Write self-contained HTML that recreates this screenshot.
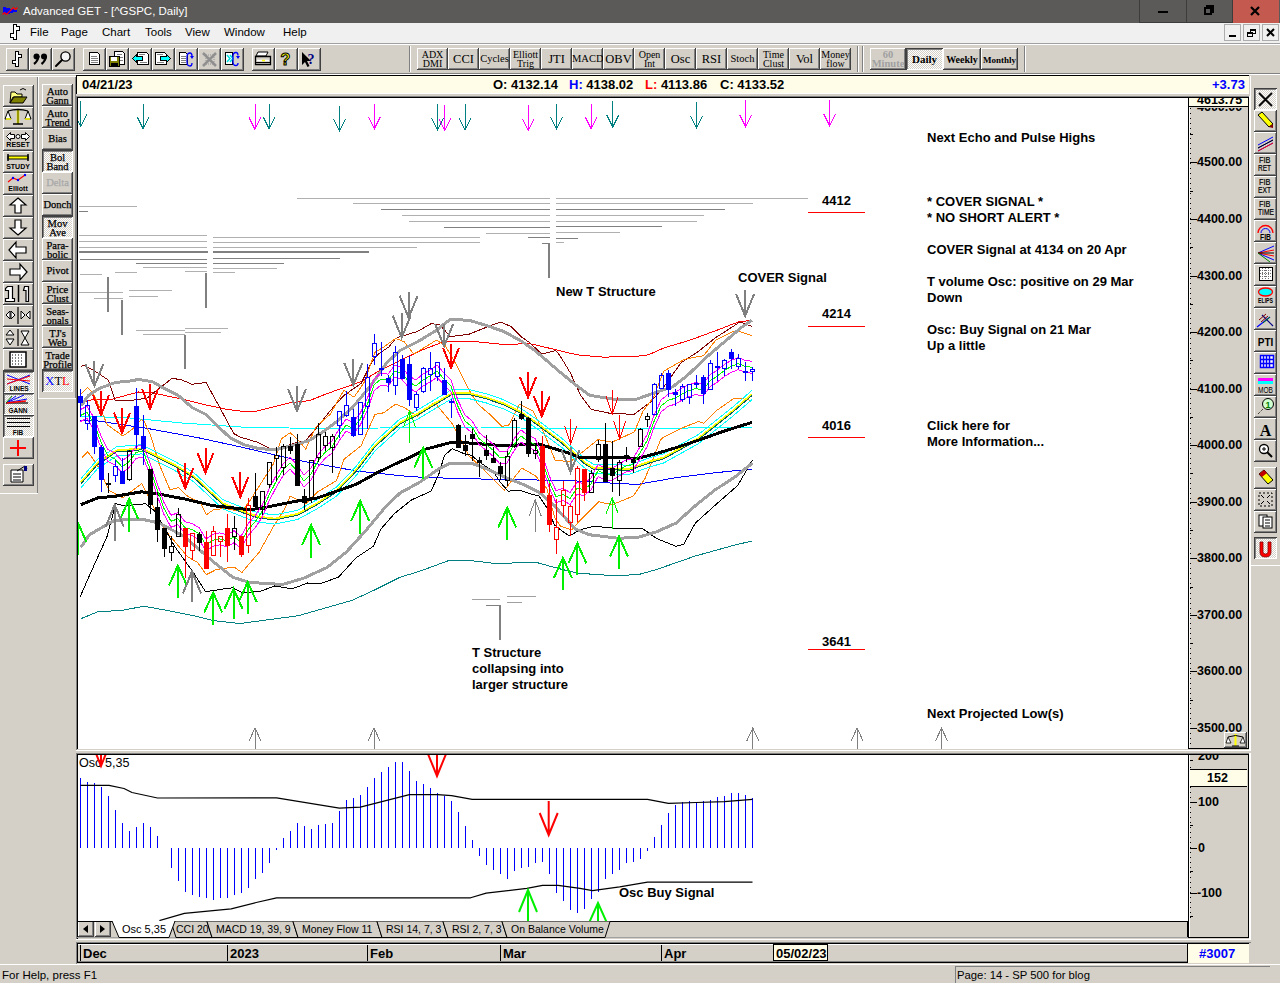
<!DOCTYPE html><html><head><meta charset="utf-8"><style>
*{box-sizing:border-box;margin:0;padding:0}
html,body{width:1280px;height:983px;overflow:hidden;background:#d4d0c8;font-family:"Liberation Sans",sans-serif;}
.abs{position:absolute}
.btn{position:absolute;background:#d4d0c8;box-shadow:inset -1px -1px #404040,inset 1px 1px #ffffff,inset -2px -2px #808080;}
.prs{position:absolute;background:repeating-conic-gradient(#ffffff 0 25%,#d4d0c8 0 50%) 0 0/2px 2px;box-shadow:inset 1px 1px #404040,inset -1px -1px #ffffff,inset 2px 2px #808080;}
.t{position:absolute;white-space:nowrap;line-height:1}
.srf{font-family:"Liberation Serif",serif;font-size:10.5px;line-height:9px;text-align:center;color:#000;letter-spacing:0px}
.b13{font-weight:bold;font-size:13px}
svg{position:absolute;left:0;top:0}
</style></head><body>
<div class="abs" style="left:0;top:0;width:1280px;height:23px;background:#5b5a58"></div>
<svg width="22" height="22" style="left:0;top:0"><path d="M3 7 H6 V8 H10 V9 H14 V10 H17 V12 H13 V13 H10 V14 H3 Z" fill="#0000ff"/><path d="M2.5 14.5 L4.5 12.5 L6.5 14.5 L11.5 9.5 L13.5 7.5 L15.5 9.5 L17.5 7.5" stroke="#ff0000" stroke-width="1.2" fill="none"/></svg>
<div class="t" style="left:23px;top:6px;font-size:11.5px;color:#ffffff">Advanced GET - [^GSPC, Daily]</div>
<div class="abs" style="left:1139px;top:0;width:47px;height:23px;border-left:1px solid #3c3c3c;border-bottom:1px solid #3c3c3c"></div>
<div class="abs" style="left:1186px;top:0;width:46px;height:23px;border-left:1px solid #3c3c3c;border-bottom:1px solid #3c3c3c"></div>
<div class="abs" style="left:1232px;top:0;width:47px;height:23px;background:#c4594f;border-left:1px solid #3c3c3c"></div>
<div class="abs" style="left:1158px;top:11px;width:10px;height:2px;background:#000"></div>
<div class="abs" style="left:1206px;top:5px;width:8px;height:8px;border:2px solid #000"></div><div class="abs" style="left:1204px;top:7px;width:8px;height:8px;border:2px solid #000;background:#5b5a58"></div>
<svg width="1280" height="30" style="left:0;top:0"><path d="M1251 7 L1259 15 M1259 7 L1251 15" stroke="#000" stroke-width="2.2"/></svg>
<div class="abs" style="left:0;top:23px;width:1280px;height:20px;background:#f0f0f0"></div>
<svg width="30" height="44" style="left:0;top:0" shape-rendering="crispEdges"><path d="M13.5 24.5 H16.5 V26.5 H19.5 V30.5 H16.5 V39.5 H13.5 V37.5 H10.5 V33.5 H13.5 Z" fill="#fff" stroke="#000" stroke-width="1"/></svg>
<div class="t" style="left:30px;top:27px;font-size:11.5px;color:#000">File</div>
<div class="t" style="left:61px;top:27px;font-size:11.5px;color:#000">Page</div>
<div class="t" style="left:102px;top:27px;font-size:11.5px;color:#000">Chart</div>
<div class="t" style="left:145px;top:27px;font-size:11.5px;color:#000">Tools</div>
<div class="t" style="left:185px;top:27px;font-size:11.5px;color:#000">View</div>
<div class="t" style="left:224px;top:27px;font-size:11.5px;color:#000">Window</div>
<div class="t" style="left:283px;top:27px;font-size:11.5px;color:#000">Help</div>
<div class="abs" style="left:1224px;top:24px;width:17px;height:17px;background:#f0f0f0;border:1px solid #adadad"></div>
<div class="abs" style="left:1243px;top:24px;width:17px;height:17px;background:#f0f0f0;border:1px solid #adadad"></div>
<div class="abs" style="left:1262px;top:24px;width:17px;height:17px;background:#f0f0f0;border:1px solid #adadad"></div>
<div class="abs" style="left:1229px;top:35px;width:7px;height:2px;background:#000"></div>
<div class="abs" style="left:1250px;top:29px;width:6px;height:5px;border:1px solid #000;border-top-width:2px"></div><div class="abs" style="left:1247px;top:32px;width:6px;height:5px;border:1px solid #000;border-top-width:2px;background:#f0f0f0"></div>
<svg width="1280" height="45" style="left:0;top:0"><path d="M1267 29 L1274 36 M1274 29 L1267 36" stroke="#000" stroke-width="2"/></svg>
<div class="abs" style="left:0;top:43px;width:1280px;height:1px;background:#a0a0a0"></div>
<div class="abs" style="left:0;top:44px;width:1280px;height:1px;background:#ffffff"></div>
<div class="abs" style="left:409px;top:46px;width:1px;height:26px;background:#808080"></div><div class="abs" style="left:410px;top:46px;width:1px;height:26px;background:#fff"></div>
<div class="abs" style="left:857px;top:46px;width:1px;height:26px;background:#808080"></div><div class="abs" style="left:858px;top:46px;width:1px;height:26px;background:#fff"></div>
<div class="abs" style="left:862px;top:46px;width:1px;height:26px;background:#808080"></div><div class="abs" style="left:863px;top:46px;width:1px;height:26px;background:#fff"></div>
<div class="abs" style="left:1024px;top:46px;width:1px;height:26px;background:#808080"></div><div class="abs" style="left:1025px;top:46px;width:1px;height:26px;background:#fff"></div>
<div class="btn" style="left:6px;top:48px;width:23px;height:23px"></div>
<div class="btn" style="left:29px;top:48px;width:23px;height:23px"></div>
<div class="btn" style="left:52px;top:48px;width:23px;height:23px"></div>
<div class="btn" style="left:83px;top:48px;width:23px;height:23px"></div>
<div class="btn" style="left:106px;top:48px;width:23px;height:23px"></div>
<div class="btn" style="left:129px;top:48px;width:23px;height:23px"></div>
<div class="btn" style="left:152px;top:48px;width:23px;height:23px"></div>
<div class="btn" style="left:175px;top:48px;width:23px;height:23px"></div>
<div class="btn" style="left:198px;top:48px;width:23px;height:23px"></div>
<div class="btn" style="left:221px;top:48px;width:23px;height:23px"></div>
<div class="btn" style="left:252px;top:48px;width:23px;height:23px"></div>
<div class="btn" style="left:275px;top:48px;width:23px;height:23px"></div>
<div class="btn" style="left:298px;top:48px;width:23px;height:23px"></div>
<svg width="400" height="80" style="left:0;top:0" shape-rendering="crispEdges"><path d="M15.5 51.5 H18.5 V54.5 H21.5 V57.5 H18.5 V66.5 H15.5 V63.5 H12.5 V60.5 H15.5 Z" fill="#fff" stroke="#000" stroke-width="1"/></svg><svg width="400" height="80" style="left:0;top:0"><circle cx="36.5" cy="56.5" r="3" fill="#000"/><path d="M38.5 56 Q38.0 61 34.0 64" stroke="#000" stroke-width="2.2" fill="none"/><circle cx="44.0" cy="56.5" r="3" fill="#000"/><path d="M46.0 56 Q45.5 61 41.5 64" stroke="#000" stroke-width="2.2" fill="none"/><circle cx="65.5" cy="56.5" r="4.6" fill="#f4f4f4" stroke="#000" stroke-width="1.4"/><path d="M62 60 L56 66" stroke="#000" stroke-width="2" stroke-linecap="round"/></svg><svg width="400" height="80" style="left:0;top:0" shape-rendering="crispEdges"><path d="M89.5 52.5 H97.5 L99.5 54.5 V64.5 H89.5 Z" fill="#fff" stroke="#000" stroke-width="1"/><path d="M91 56.5 H97 M91 58.5 H98 M91 60.5 H98 M91 62.5 H98" stroke="#808080" stroke-width="1"/><path d="M114.5 51.5 H122.5 L124.5 53.5 V64.5 H114.5 Z" fill="#fff" stroke="#000"/><path d="M117 54.5 H122 M119 57.5 H123 M119 60.5 H123" stroke="#808080"/><rect x="109.5" y="56.5" width="10" height="10" fill="#808000" stroke="#000"/><rect x="111" y="57" width="6" height="4" fill="#fff"/><rect x="111" y="63" width="7" height="3" fill="#000"/><path d="M137.5 52.5 H146.5 L148.5 54.5 V64.5 H137.5 Z" fill="#fff" stroke="#000"/><path d="M139 54.5 H145 M140 62.5 H147" stroke="#808080"/><path d="M132.5 58.5 L136.5 54.5 V56.5 H142.5 V60.5 H136.5 V62.5 Z" fill="#00ffff" stroke="#000" stroke-width="1"/><path d="M155.5 52.5 H164.5 L166.5 54.5 V64.5 H155.5 Z" fill="#fff" stroke="#000"/><path d="M157 54.5 H163 M157 62.5 H164" stroke="#808080"/><path d="M170.5 58.5 L166.5 54.5 V56.5 H160.5 V60.5 H166.5 V62.5 Z" fill="#00ffff" stroke="#000" stroke-width="1"/><path d="M179.5 52.5 H185.5 L187.5 54.5 V64.5 H179.5 Z" fill="#fff" stroke="#000"/><path d="M181 56.5 H186 M181 58.5 H186 M181 60.5 H186 M181 62.5 H186" stroke="#808080"/></svg><svg width="400" height="80" style="left:0;top:0"><path d="M190 53 Q187 53 187 57 V62 Q187 66 190 66 Q192 66 192 63" stroke="#0000ff" stroke-width="1.3" fill="none"/><path d="M190 53 Q192 53 192 56" stroke="#0000ff" stroke-width="1.3" fill="none"/><path d="M190 56 L194 56 L192 59 Z" fill="#0000ff"/><path d="M203 53 L216 66 M216 53 L203 66" stroke="#909090" stroke-width="2.5"/><rect x="206" y="55" width="8" height="9" fill="none" stroke="#909090" stroke-dasharray="1 1"/><rect x="225.5" y="52.5" width="7" height="12" fill="#fff" stroke="#000"/><path d="M227 55 L230 58.5 L227 62 M230 55 L233 58.5 L230 62" stroke="#00e0e0" stroke-width="1.5" fill="none"/><path d="M236 52.5 Q233 52.5 233 56 V62 Q233 65.5 236 65.5 Q238 65.5 238 63" stroke="#0000ff" stroke-width="1.3" fill="none"/><path d="M236 52.5 Q238 52.5 238 55.5" stroke="#0000ff" stroke-width="1.3" fill="none"/><path d="M236 56 L240 56 L238 59 Z" fill="#0000ff"/><path d="M258 52 L268 52 L266 56 L256 56 Z" fill="#fff" stroke="#000"/><path d="M255.5 56.5 L270.5 56.5 L270.5 64.5 L255.5 64.5 Z" fill="#d4d0c8" stroke="#000" stroke-width="1.3"/><path d="M257 60.5 H269" stroke="#fff" stroke-width="1.5"/><path d="M262 60.5 H265" stroke="#ffff00" stroke-width="1.5"/><path d="M256 62.5 H270" stroke="#000"/><text x="280.5" y="64.5" font-family="Liberation Sans" font-weight="bold" font-size="16" fill="#ffff00" stroke="#000" stroke-width="1">?</text><path d="M302 52 L302 65 L305 62 L307.5 67 L309.5 66 L307 61 L311 61 Z" fill="#000"/><text x="307.5" y="64" font-family="Liberation Serif" font-weight="bold" font-size="14" fill="#000080">?</text></svg>
<div class="btn" style="left:417px;top:48px;width:31px;height:22px"></div><div class="t" style="left:417px;top:50px;width:31px;font-family:'Liberation Serif',serif;font-size:10px;line-height:9px;text-align:center;color:#000">ADX<br>DMI</div>
<div class="btn" style="left:448px;top:48px;width:31px;height:22px"></div><div class="t" style="left:448px;top:53px;width:31px;font-family:'Liberation Serif',serif;font-size:12.5px;line-height:12px;text-align:center;color:#000">CCI</div>
<div class="btn" style="left:479px;top:48px;width:31px;height:22px"></div><div class="t" style="left:479px;top:53px;width:31px;font-family:'Liberation Serif',serif;font-size:10.5px;line-height:12px;text-align:center;color:#000">Cycles</div>
<div class="btn" style="left:510px;top:48px;width:31px;height:22px"></div><div class="t" style="left:510px;top:50px;width:31px;font-family:'Liberation Serif',serif;font-size:10px;line-height:9px;text-align:center;color:#000">Elliott<br>Trig</div>
<div class="btn" style="left:541px;top:48px;width:31px;height:22px"></div><div class="t" style="left:541px;top:53px;width:31px;font-family:'Liberation Serif',serif;font-size:12.5px;line-height:12px;text-align:center;color:#000">JTI</div>
<div class="btn" style="left:572px;top:48px;width:31px;height:22px"></div><div class="t" style="left:572px;top:53px;width:31px;font-family:'Liberation Serif',serif;font-size:10.5px;line-height:12px;text-align:center;color:#000">MACD</div>
<div class="btn" style="left:603px;top:48px;width:31px;height:22px"></div><div class="t" style="left:603px;top:53px;width:31px;font-family:'Liberation Serif',serif;font-size:12.5px;line-height:12px;text-align:center;color:#000">OBV</div>
<div class="btn" style="left:634px;top:48px;width:31px;height:22px"></div><div class="t" style="left:634px;top:50px;width:31px;font-family:'Liberation Serif',serif;font-size:10px;line-height:9px;text-align:center;color:#000">Open<br>Int</div>
<div class="btn" style="left:665px;top:48px;width:31px;height:22px"></div><div class="t" style="left:665px;top:53px;width:31px;font-family:'Liberation Serif',serif;font-size:12.5px;line-height:12px;text-align:center;color:#000">Osc</div>
<div class="btn" style="left:696px;top:48px;width:31px;height:22px"></div><div class="t" style="left:696px;top:53px;width:31px;font-family:'Liberation Serif',serif;font-size:12.5px;line-height:12px;text-align:center;color:#000">RSI</div>
<div class="btn" style="left:727px;top:48px;width:31px;height:22px"></div><div class="t" style="left:727px;top:53px;width:31px;font-family:'Liberation Serif',serif;font-size:10.5px;line-height:12px;text-align:center;color:#000">Stoch</div>
<div class="btn" style="left:758px;top:48px;width:31px;height:22px"></div><div class="t" style="left:758px;top:50px;width:31px;font-family:'Liberation Serif',serif;font-size:10px;line-height:9px;text-align:center;color:#000">Time<br>Clust</div>
<div class="btn" style="left:789px;top:48px;width:31px;height:22px"></div><div class="t" style="left:789px;top:53px;width:31px;font-family:'Liberation Serif',serif;font-size:12.5px;line-height:12px;text-align:center;color:#000">Vol</div>
<div class="btn" style="left:820px;top:48px;width:31px;height:22px"></div><div class="t" style="left:820px;top:50px;width:31px;font-family:'Liberation Serif',serif;font-size:10px;line-height:9px;text-align:center;color:#000">Money<br>flow</div>
<div class="btn" style="left:870px;top:48px;width:36px;height:22px"></div><div class="t" style="left:870px;top:50px;width:36px;font-family:'Liberation Serif',serif;font-size:10.5px;line-height:9px;text-align:center;color:#a0a0a0;font-weight:bold">60<br>Minute</div>
<div class="prs" style="left:906px;top:48px;width:37px;height:22px"></div><div class="t" style="left:906px;top:53px;width:37px;font-family:'Liberation Serif',serif;font-size:11px;line-height:12px;text-align:center;color:#000;font-weight:bold">Daily</div>
<div class="btn" style="left:943px;top:48px;width:38px;height:22px"></div><div class="t" style="left:943px;top:54px;width:38px;font-family:'Liberation Serif',serif;font-size:10px;line-height:12px;text-align:center;color:#000;font-weight:bold">Weekly</div>
<div class="btn" style="left:981px;top:48px;width:37px;height:22px"></div><div class="t" style="left:981px;top:54px;width:37px;font-family:'Liberation Serif',serif;font-size:9px;line-height:12px;text-align:center;color:#000;font-weight:bold">Monthly</div>
<div class="abs" style="left:0;top:73px;width:1280px;height:1px;background:#808080"></div>
<div class="abs" style="left:0;top:74px;width:1280px;height:1px;background:#ffffff"></div>
<div class="abs" style="left:0;top:76px;width:38px;height:1px;background:#fff"></div>
<div class="abs" style="left:37px;top:77px;width:1px;height:416px;background:#808080"></div>
<div class="abs" style="left:0;top:493px;width:38px;height:1px;background:#fff"></div>
<div class="abs" style="left:38px;top:76px;width:1px;height:323px;background:#fff"></div>
<div class="abs" style="left:38px;top:76px;width:38px;height:1px;background:#fff"></div>
<div class="abs" style="left:38px;top:398px;width:38px;height:1px;background:#fff"></div>
<div class="abs" style="left:75px;top:77px;width:1px;height:321px;background:#808080"></div>
<div class="btn" style="left:3px;top:85px;width:31px;height:22px"></div>
<div class="btn" style="left:3px;top:107px;width:31px;height:22px"></div>
<div class="btn" style="left:3px;top:129px;width:31px;height:22px"></div>
<div class="btn" style="left:3px;top:151px;width:31px;height:22px"></div>
<div class="btn" style="left:3px;top:173px;width:31px;height:22px"></div>
<div class="btn" style="left:3px;top:195px;width:31px;height:22px"></div>
<div class="btn" style="left:3px;top:217px;width:31px;height:22px"></div>
<div class="btn" style="left:3px;top:239px;width:31px;height:22px"></div>
<div class="btn" style="left:3px;top:261px;width:31px;height:22px"></div>
<div class="btn" style="left:3px;top:283px;width:31px;height:22px"></div>
<div class="btn" style="left:3px;top:305px;width:31px;height:22px"></div>
<div class="btn" style="left:3px;top:327px;width:31px;height:22px"></div>
<div class="btn" style="left:3px;top:349px;width:31px;height:22px"></div>
<div class="prs" style="left:3px;top:371px;width:31px;height:22px"></div>
<div class="prs" style="left:3px;top:393px;width:31px;height:22px"></div>
<div class="prs" style="left:3px;top:415px;width:31px;height:22px"></div>
<div class="btn" style="left:3px;top:437px;width:31px;height:22px"></div>
<div class="btn" style="left:3px;top:464px;width:31px;height:22px"></div>
<svg width="80" height="500" style="left:0;top:0"><path d="M11 92 L15 92 L17 94 L22 94 L22 97 L13 97 L10 103 Z" fill="#ffff80" stroke="#000"/><path d="M10 103 L14 97 L27 97 L23 103 Z" fill="#808000" stroke="#000"/><path d="M20 90 Q23 87 26 90" stroke="#000" fill="none"/><path d="M18 109 L18 124" stroke="#ffff00" stroke-width="2.5"/><path d="M18 109 L18 124" stroke="#000" stroke-width="0.8"/><path d="M8 111 Q18 108 28 111" stroke="#000" fill="none" stroke-width="1.3"/><path d="M8 111 L5 119 L11 119 Z M28 111 L25 119 L31 119 Z" fill="#fff" stroke="#000"/><path d="M6 119 H11 M25 119 H30" stroke="#ffff00" stroke-width="1.5"/><path d="M13 124 H23" stroke="#000" stroke-width="1.5"/><path d="M6.5 136.5 L10.5 132.5 V134.5 H14.5 V138.5 H10.5 V140.5 Z M29.5 136.5 L25.5 132.5 V134.5 H21.5 V138.5 H25.5 V140.5 Z" fill="#fff" stroke="#000" stroke-width="1"/><circle cx="18" cy="136.5" r="2" fill="#fff" stroke="#000"/><text x="18" y="147" text-anchor="middle" font-family="Liberation Sans" font-weight="bold" font-size="7" fill="#000">RESET</text><rect x="8" y="156" width="20" height="3" fill="#ffff00" stroke="#000"/><path d="M8 154 V161 M28 154 V161" stroke="#000" stroke-width="1.5"/><text x="18" y="169" text-anchor="middle" font-family="Liberation Sans" font-weight="bold" font-size="7" fill="#000">STUDY</text><path d="M8 182 L13 178 L18 180 L25 175" stroke="#ff0000" fill="none" stroke-width="1.2"/><circle cx="13" cy="178" r="1.2" fill="#0000ff"/><circle cx="18" cy="180" r="1.2" fill="#0000ff"/><circle cx="25" cy="175" r="1.2" fill="#0000ff"/><text x="18" y="191" text-anchor="middle" font-family="Liberation Sans" font-weight="bold" font-size="7" fill="#000">Elliott</text><path d="M18 198 L26 205 L21 205 L21 213 L15 213 L15 205 L10 205 Z" fill="#fff" stroke="#000" stroke-width="1.2"/><path d="M18 235 L26 228 L21 228 L21 220 L15 220 L15 228 L10 228 Z" fill="#fff" stroke="#000" stroke-width="1.2"/><path d="M9 250 L16 242 L16 247 L26 247 L26 253 L16 253 L16 258 Z" fill="#fff" stroke="#000" stroke-width="1.2"/><path d="M27 272 L20 264 L20 269 L10 269 L10 275 L20 275 L20 280 Z" fill="#fff" stroke="#000" stroke-width="1.2"/><path d="M7.5 286.5 H12.5 V298.5 H14.5 V301.5 H5.5 V298.5 H8.5 V290.5 H5.5 V288.5 Z" fill="#fff" stroke="#000" stroke-width="1.2"/><path d="M18.5 285 V302" stroke="#000" stroke-width="1.5"/><path d="M24.5 286.5 H28.5 V301.5 H26 V290.5 H23.5 Z" fill="#fff" stroke="#000" stroke-width="1.2"/><path d="M6 315 L10 311 L10 319 Z M15 315 L11 311 L11 319 Z M21 311 L25 315 L21 319 Z M30 311 L26 315 L30 319 Z" fill="#fff" stroke="#000"/><path d="M18 307 V324" stroke="#000" stroke-width="1.2"/><path d="M10 330 L14 335 L6 335 Z M10 345 L14 339 L6 339 Z" fill="#fff" stroke="#000"/><path d="M18 329 V346" stroke="#000" stroke-width="1.2"/><path d="M21 331 L29 331 L25 338 Z M21 345 L29 345 L25 338 Z" fill="#fff" stroke="#000"/><rect x="10" y="352" width="16" height="15" fill="#fff" stroke="#000" stroke-width="1.5"/><path d="M12 355 H24 M12 358 H24 M12 361 H24 M12 364 H24" stroke="#000" stroke-dasharray="1 2"/><path d="M7 375 L30 384 M7 384 L30 375" stroke="#0000ff" stroke-width="1"/><path d="M7 379 L30 381" stroke="#ff0000"/><path d="M7 384 L30 376" stroke="#ff0000"/><text x="19" y="391" text-anchor="middle" font-family="Liberation Sans" font-weight="bold" font-size="6.5" fill="#000">LINES</text><path d="M6 403 L28 403" stroke="#000" stroke-width="1.2"/><path d="M6 403 L24 395 M6 403 L27 399 M6 403 L16 396" stroke="#0000ff"/><path d="M6 403 L26 401" stroke="#ff0000" stroke-width="1.5"/><path d="M6 403 L12 396" stroke="#008000"/><text x="18" y="413" text-anchor="middle" font-family="Liberation Sans" font-weight="bold" font-size="6.5" fill="#000">GANN</text><path d="M7 418.5 H30 M7 422.5 H30 M7 426.5 H30" stroke="#000" stroke-width="1"/><text x="18" y="435" text-anchor="middle" font-family="Liberation Sans" font-weight="bold" font-size="6.5" fill="#000">FIB</text><path d="M18 440 V456 M10 448 H26" stroke="#ff0000" stroke-width="2"/><path d="M11 470 L23 470 L23 482 L11 482 Z" fill="#fff" stroke="#000"/><path d="M13 474 H21 M13 477 H21 M13 480 H21" stroke="#000"/><path d="M17 471 L25 466 L27 469" stroke="#000" fill="none"/><rect x="24" y="466" width="3" height="5" fill="#000080"/></svg>
<div class="btn" style="left:42px;top:84px;width:31px;height:22px"></div>
<div class="t srf" style="left:42px;top:87px;width:31px;color:#000;-webkit-text-stroke:0.25px #000">Auto<br>Gann</div>
<div class="btn" style="left:42px;top:106px;width:31px;height:22px"></div>
<div class="t srf" style="left:42px;top:109px;width:31px;color:#000;-webkit-text-stroke:0.25px #000">Auto<br>Trend</div>
<div class="btn" style="left:42px;top:128px;width:31px;height:22px"></div>
<div class="t srf" style="left:42px;top:134px;width:31px;color:#000;-webkit-text-stroke:0.25px #000">Bias</div>
<div class="prs" style="left:42px;top:150px;width:31px;height:22px"></div>
<div class="t srf" style="left:42px;top:153px;width:31px;color:#000;-webkit-text-stroke:0.25px #000">Bol<br>Band</div>
<div class="btn" style="left:42px;top:172px;width:31px;height:22px"></div>
<div class="t srf" style="left:42px;top:178px;width:31px;color:#a8a8a8;-webkit-text-stroke:0.25px #a8a8a8">Delta</div>
<div class="btn" style="left:42px;top:194px;width:31px;height:22px"></div>
<div class="t srf" style="left:42px;top:200px;width:31px;color:#000;-webkit-text-stroke:0.25px #000">Donch</div>
<div class="prs" style="left:42px;top:216px;width:31px;height:22px"></div>
<div class="t srf" style="left:42px;top:219px;width:31px;color:#000;-webkit-text-stroke:0.25px #000">Mov<br>Ave</div>
<div class="btn" style="left:42px;top:238px;width:31px;height:22px"></div>
<div class="t srf" style="left:42px;top:241px;width:31px;color:#000;-webkit-text-stroke:0.25px #000">Para-<br>bolic</div>
<div class="btn" style="left:42px;top:260px;width:31px;height:22px"></div>
<div class="t srf" style="left:42px;top:266px;width:31px;color:#000;-webkit-text-stroke:0.25px #000">Pivot</div>
<div class="btn" style="left:42px;top:282px;width:31px;height:22px"></div>
<div class="t srf" style="left:42px;top:285px;width:31px;color:#000;-webkit-text-stroke:0.25px #000">Price<br>Clust</div>
<div class="btn" style="left:42px;top:304px;width:31px;height:22px"></div>
<div class="t srf" style="left:42px;top:307px;width:31px;color:#000;-webkit-text-stroke:0.25px #000">Seas-<br>onals</div>
<div class="btn" style="left:42px;top:326px;width:31px;height:22px"></div>
<div class="t srf" style="left:42px;top:329px;width:31px;color:#000;-webkit-text-stroke:0.25px #000">TJ's<br>Web</div>
<div class="btn" style="left:42px;top:348px;width:31px;height:22px"></div>
<div class="t srf" style="left:42px;top:351px;width:31px;color:#000;-webkit-text-stroke:0.25px #000">Trade<br>Profile</div>
<div class="prs" style="left:42px;top:370px;width:31px;height:22px"></div>
<div class="t" style="left:42px;top:375px;width:31px;text-align:center;font-family:'Liberation Serif',serif;font-size:12.5px;"><span style="color:#0000ff">X</span><span style="color:#000">T</span><span style="color:#ff0000">L</span></div>
<div class="abs" style="left:77px;top:75px;width:1172px;height:19px;background:#fffde8;border-top:1px solid #000"></div>
<div class="abs" style="left:76px;top:75px;width:1px;height:19px;background:#000"></div>
<div class="abs" style="left:77px;top:93px;width:1172px;height:1px;background:#fff"></div>
<div class="t b13" style="left:82px;top:78px;color:#000">04/21/23</div>
<div class="t b13" style="left:493px;top:78px;color:#000">O: 4132.14</div>
<div class="t b13" style="left:569px;top:78px;"><span style="color:#0000ff">H:</span> 4138.02</div>
<div class="t b13" style="left:645px;top:78px;"><span style="color:#ff0000">L:</span> 4113.86</div>
<div class="t b13" style="left:720px;top:78px;color:#000">C: 4133.52</div>
<div class="t b13" style="left:1212px;top:78px;color:#0000ff">+3.73</div>
<div class="abs" style="left:76px;top:96px;width:1175px;height:655px;background:#d4d0c8"></div>
<div class="abs" style="left:78px;top:98px;width:1110px;height:651px;background:#ffffff"></div>
<div class="abs" style="left:76px;top:96px;width:1175px;height:1px;background:#808080"></div>
<div class="abs" style="left:76px;top:96px;width:1px;height:655px;background:#808080"></div>
<div class="abs" style="left:77px;top:97px;width:1172px;height:1px;background:#000"></div>
<div class="abs" style="left:77px;top:97px;width:1px;height:652px;background:#000"></div>
<div class="abs" style="left:1188px;top:97px;width:1px;height:652px;background:#000"></div>
<div class="abs" style="left:1189px;top:98px;width:59px;height:650px;background:#d4d0c8"></div>
<div class="abs" style="left:1189px;top:107px;width:1px;height:641px;background:#ffffff"></div>
<div class="abs" style="left:1248px;top:97px;width:1px;height:652px;background:#000"></div>
<div class="abs" style="left:1188px;top:748px;width:61px;height:1px;background:#000"></div>
<div class="abs" style="left:1249px;top:96px;width:2px;height:655px;background:#ffffff"></div>
<div class="abs" style="left:76px;top:750px;width:1175px;height:1px;background:#ffffff"></div>
<div class="abs" style="left:78px;top:749px;width:1110px;height:1px;background:#d4d0c8"></div>
<div class="abs" style="left:1189px;top:98px;width:59px;height:9px;background:#fffde8;border-bottom:1px solid #000;overflow:hidden"><div class="t" style="left:8px;top:-4px;font-weight:bold;font-size:12.5px;color:#000">4613.75</div></div>
<svg width="1280" height="983" style="left:0;top:0" shape-rendering="crispEdges"><line x1="1190.5" y1="108" x2="1190.5" y2="748" stroke="#000" stroke-width="1" stroke-dasharray="1 4"/><line x1="1190" y1="728.5" x2="1197" y2="728.5" stroke="#000" stroke-width="1"/><line x1="1190" y1="700.5" x2="1193" y2="700.5" stroke="#000" stroke-width="1"/><line x1="1190" y1="671.5" x2="1197" y2="671.5" stroke="#000" stroke-width="1"/><line x1="1190" y1="643.5" x2="1193" y2="643.5" stroke="#000" stroke-width="1"/><line x1="1190" y1="615.5" x2="1197" y2="615.5" stroke="#000" stroke-width="1"/><line x1="1190" y1="587.5" x2="1193" y2="587.5" stroke="#000" stroke-width="1"/><line x1="1190" y1="558.5" x2="1197" y2="558.5" stroke="#000" stroke-width="1"/><line x1="1190" y1="530.5" x2="1193" y2="530.5" stroke="#000" stroke-width="1"/><line x1="1190" y1="502.5" x2="1197" y2="502.5" stroke="#000" stroke-width="1"/><line x1="1190" y1="473.5" x2="1193" y2="473.5" stroke="#000" stroke-width="1"/><line x1="1190" y1="445.5" x2="1197" y2="445.5" stroke="#000" stroke-width="1"/><line x1="1190" y1="417.5" x2="1193" y2="417.5" stroke="#000" stroke-width="1"/><line x1="1190" y1="389.5" x2="1197" y2="389.5" stroke="#000" stroke-width="1"/><line x1="1190" y1="360.5" x2="1193" y2="360.5" stroke="#000" stroke-width="1"/><line x1="1190" y1="332.5" x2="1197" y2="332.5" stroke="#000" stroke-width="1"/><line x1="1190" y1="304.5" x2="1193" y2="304.5" stroke="#000" stroke-width="1"/><line x1="1190" y1="276.5" x2="1197" y2="276.5" stroke="#000" stroke-width="1"/><line x1="1190" y1="247.5" x2="1193" y2="247.5" stroke="#000" stroke-width="1"/><line x1="1190" y1="219.5" x2="1197" y2="219.5" stroke="#000" stroke-width="1"/><line x1="1190" y1="191.5" x2="1193" y2="191.5" stroke="#000" stroke-width="1"/><line x1="1190" y1="162.5" x2="1197" y2="162.5" stroke="#000" stroke-width="1"/><line x1="1190" y1="134.5" x2="1193" y2="134.5" stroke="#000" stroke-width="1"/></svg>
<div class="t" style="left:1197px;top:722px;font-weight:bold;font-size:12.5px;color:#000">3500.00</div>
<div class="t" style="left:1197px;top:665px;font-weight:bold;font-size:12.5px;color:#000">3600.00</div>
<div class="t" style="left:1197px;top:609px;font-weight:bold;font-size:12.5px;color:#000">3700.00</div>
<div class="t" style="left:1197px;top:552px;font-weight:bold;font-size:12.5px;color:#000">3800.00</div>
<div class="t" style="left:1197px;top:496px;font-weight:bold;font-size:12.5px;color:#000">3900.00</div>
<div class="t" style="left:1197px;top:439px;font-weight:bold;font-size:12.5px;color:#000">4000.00</div>
<div class="t" style="left:1197px;top:383px;font-weight:bold;font-size:12.5px;color:#000">4100.00</div>
<div class="t" style="left:1197px;top:326px;font-weight:bold;font-size:12.5px;color:#000">4200.00</div>
<div class="t" style="left:1197px;top:270px;font-weight:bold;font-size:12.5px;color:#000">4300.00</div>
<div class="t" style="left:1197px;top:213px;font-weight:bold;font-size:12.5px;color:#000">4400.00</div>
<div class="t" style="left:1197px;top:156px;font-weight:bold;font-size:12.5px;color:#000">4500.00</div>
<div class="abs" style="left:1189px;top:98px;width:59px;height:9px;background:#fffde8;border-bottom:1px solid #000;overflow:hidden"><div class="t" style="left:8px;top:-4px;font-weight:bold;font-size:12.5px;color:#000">4613.75</div></div>
<div class="abs" style="left:1192px;top:108px;width:55px;height:4px;overflow:hidden"><div class="t" style="left:5px;top:-7px;font-weight:bold;font-size:12.5px;color:#000">4600.00</div></div>
<div class="btn" style="left:1224px;top:732px;width:23px;height:16px"></div><svg width="1280" height="983" style="left:0;top:0"><path d="M1235.5 734 V746" stroke="#ffff00" stroke-width="2"/><path d="M1228 737 Q1235.5 734 1243 737" stroke="#000" fill="none"/><path d="M1228 737 L1226 743 L1231 743 Z M1243 737 L1240 743 L1245 743 Z" fill="#fff" stroke="#000" stroke-width="0.8"/><path d="M1232 746 H1239" stroke="#000"/></svg>
<div class="abs" style="left:76px;top:753px;width:1175px;height:187px;background:#d4d0c8"></div>
<div class="abs" style="left:78px;top:755px;width:1110px;height:166px;background:#ffffff"></div>
<div class="abs" style="left:76px;top:753px;width:1175px;height:1px;background:#808080"></div>
<div class="abs" style="left:76px;top:753px;width:1px;height:187px;background:#808080"></div>
<div class="abs" style="left:77px;top:754px;width:1172px;height:1px;background:#000"></div>
<div class="abs" style="left:77px;top:754px;width:1px;height:185px;background:#000"></div>
<div class="abs" style="left:1188px;top:754px;width:1px;height:184px;background:#000"></div>
<div class="abs" style="left:1189px;top:755px;width:1px;height:182px;background:#ffffff"></div>
<div class="abs" style="left:1248px;top:754px;width:1px;height:184px;background:#000"></div>
<div class="abs" style="left:1188px;top:937px;width:61px;height:1px;background:#000"></div>
<div class="abs" style="left:1249px;top:753px;width:2px;height:187px;background:#ffffff"></div>
<div class="abs" style="left:76px;top:939px;width:1175px;height:1px;background:#ffffff"></div>
<svg width="1280" height="983" style="left:0;top:0" shape-rendering="crispEdges"><line x1="1190.5" y1="757" x2="1190.5" y2="920" stroke="#000" stroke-width="1" stroke-dasharray="1 4"/><line x1="1190" y1="916.5" x2="1193" y2="916.5" stroke="#000" stroke-width="1"/><line x1="1190" y1="893.5" x2="1197" y2="893.5" stroke="#000" stroke-width="1"/><line x1="1190" y1="871.5" x2="1193" y2="871.5" stroke="#000" stroke-width="1"/><line x1="1190" y1="848.5" x2="1197" y2="848.5" stroke="#000" stroke-width="1"/><line x1="1190" y1="825.5" x2="1193" y2="825.5" stroke="#000" stroke-width="1"/><line x1="1190" y1="802.5" x2="1197" y2="802.5" stroke="#000" stroke-width="1"/><line x1="1190" y1="780.5" x2="1193" y2="780.5" stroke="#000" stroke-width="1"/><line x1="1190" y1="757.5" x2="1197" y2="757.5" stroke="#000" stroke-width="1"/></svg>
<div class="t" style="left:1198px;top:796px;font-weight:bold;font-size:12.5px;color:#000">100</div>
<div class="t" style="left:1198px;top:842px;font-weight:bold;font-size:12.5px;color:#000">0</div>
<div class="t" style="left:1197px;top:887px;font-weight:bold;font-size:12.5px;color:#000">-100</div>
<div class="abs" style="left:1190px;top:769px;width:57px;height:18px;background:#fffde8;border-top:1px solid #000;border-bottom:1px solid #000"></div>
<div class="t" style="left:1207px;top:772px;font-weight:bold;font-size:12.5px;color:#000">152</div>
<div class="abs" style="left:1190px;top:755px;width:57px;height:12px;overflow:hidden;background:#d4d0c8"><div class="t" style="left:8px;top:-5px;font-weight:bold;font-size:12.5px;color:#000">200</div></div><div class="abs" style="left:1190px;top:760px;width:3px;height:1px;background:#000"></div>
<div class="abs" style="left:78px;top:921px;width:1110px;height:17px;background:#d4d0c8"></div>
<div class="abs" style="left:1187px;top:921px;width:2px;height:17px;background:#000"></div>
<div class="btn" style="left:78px;top:921px;width:16px;height:16px"></div><div class="btn" style="left:95px;top:921px;width:16px;height:16px"></div>
<svg width="1280" height="983" style="left:0;top:0"><path d="M83 929 L88 925 L88 933 Z" fill="#000"/><path d="M105 929 L100 925 L100 933 Z" fill="#000"/></svg>
<svg width="1280" height="983" style="left:0;top:0"><line x1="78" y1="921.5" x2="1188" y2="921.5" stroke="#000" stroke-width="1"/><line x1="77" y1="937.5" x2="1188" y2="937.5" stroke="#a0a0a0" stroke-width="1"/><path d="M171 921.5 L176 937.5 L212 937.5 L207 921.5" fill="#d4d0c8" stroke="#000" stroke-width="1"/><path d="M207 921.5 L212 937.5 L298 937.5 L293 921.5" fill="#d4d0c8" stroke="#000" stroke-width="1"/><path d="M293 921.5 L298 937.5 L382 937.5 L377 921.5" fill="#d4d0c8" stroke="#000" stroke-width="1"/><path d="M377 921.5 L382 937.5 L448 937.5 L443 921.5" fill="#d4d0c8" stroke="#000" stroke-width="1"/><path d="M443 921.5 L448 937.5 L507 937.5 L502 921.5" fill="#d4d0c8" stroke="#000" stroke-width="1"/><path d="M502 921.5 L507 937.5 L605 937.5 L610 921.5" fill="#d4d0c8" stroke="#000" stroke-width="1"/><path d="M112 921 L175 921 L169 937.5 L119 937.5 Z" fill="#fff" stroke="none"/><path d="M112 921 L119 937.5 L169 937.5 L175 921" fill="none" stroke="#000" stroke-width="1"/></svg>
<div class="t" style="left:122px;top:924px;font-size:11px;color:#000">Osc 5,35</div>
<div class="t" style="left:176px;top:924px;font-size:10.5px;color:#000">CCI 20</div>
<div class="t" style="left:216px;top:924px;font-size:10.5px;color:#000">MACD 19, 39, 9</div>
<div class="t" style="left:302px;top:924px;font-size:10.5px;color:#000">Money Flow 11</div>
<div class="t" style="left:386px;top:924px;font-size:10.5px;color:#000">RSI 14, 7, 3</div>
<div class="t" style="left:452px;top:924px;font-size:10.5px;color:#000">RSI 2, 7, 3</div>
<div class="t" style="left:511px;top:924px;font-size:10.5px;color:#000">On Balance Volume</div>
<div class="abs" style="left:76px;top:942px;width:1175px;height:1px;background:#808080"></div>
<div class="abs" style="left:77px;top:943px;width:1172px;height:1px;background:#000"></div>
<div class="abs" style="left:78px;top:944px;width:1109px;height:1px;background:#ffffff"></div>
<div class="abs" style="left:78px;top:945px;width:1109px;height:16px;background:#d4d0c8"></div>
<div class="abs" style="left:78px;top:961px;width:1109px;height:1px;background:#808080"></div>
<div class="abs" style="left:77px;top:962px;width:1172px;height:1px;background:#000"></div>
<div class="abs" style="left:76px;top:942px;width:1px;height:22px;background:#808080"></div>
<div class="abs" style="left:77px;top:943px;width:1px;height:20px;background:#000"></div>
<div class="abs" style="left:1187px;top:943px;width:1px;height:20px;background:#000"></div>
<div class="abs" style="left:1188px;top:944px;width:61px;height:19px;background:#fffde8"></div>
<div class="abs" style="left:0px;top:964px;width:1280px;height:1px;background:#ffffff"></div>
<div class="t b13" style="left:1199px;top:947px;color:#0000ff">#3007</div>
<div class="abs" style="left:80px;top:945px;width:1px;height:16px;background:#000"></div>
<div class="t b13" style="left:83px;top:947px;color:#000">Dec</div>
<div class="abs" style="left:227px;top:945px;width:1px;height:16px;background:#000"></div>
<div class="t b13" style="left:230px;top:947px;color:#000">2023</div>
<div class="abs" style="left:367px;top:945px;width:1px;height:16px;background:#000"></div>
<div class="t b13" style="left:370px;top:947px;color:#000">Feb</div>
<div class="abs" style="left:500px;top:945px;width:1px;height:16px;background:#000"></div>
<div class="t b13" style="left:503px;top:947px;color:#000">Mar</div>
<div class="abs" style="left:661px;top:945px;width:1px;height:16px;background:#000"></div>
<div class="t b13" style="left:664px;top:947px;color:#000">Apr</div>
<div class="abs" style="left:773px;top:944px;width:55px;height:17px;background:#fffde8;border:1px solid #000"></div>
<div class="t b13" style="left:776px;top:947px;color:#000">05/02/23</div>
<div class="abs" style="left:0;top:964px;width:1280px;height:1px;background:#fff"></div>
<div class="t" style="left:2px;top:970px;font-size:11.5px;color:#000">For Help, press F1</div>
<div class="abs" style="left:955px;top:966px;width:315px;height:17px;border-top:1px solid #808080;border-left:1px solid #808080"></div>
<div class="t" style="left:957px;top:970px;font-size:11.3px;color:#000">Page: 14 - SP 500 for blog</div>
<div class="abs" style="left:1250px;top:76px;width:1px;height:490px;background:#fff"></div>
<div class="abs" style="left:1251px;top:565px;width:29px;height:1px;background:#fff"></div>
<div class="prs" style="left:1254px;top:88px;width:23px;height:22px"></div>
<div class="btn" style="left:1254px;top:110px;width:23px;height:22px"></div>
<div class="btn" style="left:1254px;top:132px;width:23px;height:22px"></div>
<div class="btn" style="left:1254px;top:154px;width:23px;height:22px"></div>
<div class="btn" style="left:1254px;top:176px;width:23px;height:22px"></div>
<div class="btn" style="left:1254px;top:198px;width:23px;height:22px"></div>
<div class="btn" style="left:1254px;top:220px;width:23px;height:22px"></div>
<div class="btn" style="left:1254px;top:242px;width:23px;height:22px"></div>
<div class="btn" style="left:1254px;top:264px;width:23px;height:22px"></div>
<div class="btn" style="left:1254px;top:286px;width:23px;height:22px"></div>
<div class="btn" style="left:1254px;top:308px;width:23px;height:22px"></div>
<div class="btn" style="left:1254px;top:330px;width:23px;height:22px"></div>
<div class="btn" style="left:1254px;top:352px;width:23px;height:22px"></div>
<div class="btn" style="left:1254px;top:374px;width:23px;height:22px"></div>
<div class="btn" style="left:1254px;top:396px;width:23px;height:22px"></div>
<div class="btn" style="left:1254px;top:418px;width:23px;height:22px"></div>
<div class="btn" style="left:1254px;top:440px;width:23px;height:22px"></div>
<div class="btn" style="left:1254px;top:467px;width:23px;height:22px"></div>
<div class="btn" style="left:1254px;top:489px;width:23px;height:22px"></div>
<div class="btn" style="left:1254px;top:511px;width:23px;height:22px"></div>
<div class="prs" style="left:1254px;top:537px;width:23px;height:22px"></div>
<svg width="1280" height="600" style="left:0;top:0"><path d="M1259 93 L1272 106 M1272 93 L1259 106" stroke="#000" stroke-width="1.8"/><path d="M1258 115 L1262 112 L1273 124 L1269 127 Z" fill="#ffff00" stroke="#000"/><path d="M1269 127 L1273 124 L1273 128 Z" fill="#800000"/><path d="M1258 145 L1273 137 M1258 148 L1273 140 M1258 151 L1273 143" stroke="#0000ff"/><path d="M1258 148 L1273 140" stroke="#000"/><path d="M1258 151 L1273 143" stroke="#ff0000"/><text x="1259" y="163" font-family="Liberation Sans" font-size="9.5" textLength="11.5" lengthAdjust="spacingAndGlyphs" fill="#000" stroke="#000" stroke-width="0.2">FIB</text><text x="1258" y="171" font-family="Liberation Sans" font-size="9.5" textLength="13" lengthAdjust="spacingAndGlyphs" fill="#000" stroke="#000" stroke-width="0.2">RET</text><text x="1259" y="185" font-family="Liberation Sans" font-size="9.5" textLength="11.5" lengthAdjust="spacingAndGlyphs" fill="#000" stroke="#000" stroke-width="0.2">FIB</text><text x="1258" y="193" font-family="Liberation Sans" font-size="9.5" textLength="13" lengthAdjust="spacingAndGlyphs" fill="#000" stroke="#000" stroke-width="0.2">EXT</text><text x="1259" y="207" font-family="Liberation Sans" font-size="9.5" textLength="11.5" lengthAdjust="spacingAndGlyphs" fill="#000" stroke="#000" stroke-width="0.2">FIB</text><text x="1258" y="215" font-family="Liberation Sans" font-size="9.5" textLength="16" lengthAdjust="spacingAndGlyphs" fill="#000" stroke="#000" stroke-width="0.2">TIME</text><path d="M1258 233 A7.5 7.5 0 0 1 1273 233" stroke="#ff0000" fill="none" stroke-width="1.3"/><path d="M1261 233 A4.5 4.5 0 0 1 1270 233" stroke="#0000ff" fill="none"/><text x="1260" y="240" font-family="Liberation Sans" font-weight="bold" font-size="9" textLength="11" lengthAdjust="spacingAndGlyphs" fill="#000">FIB</text><path d="M1258 253 L1274 246 M1258 253 L1274 260" stroke="#0000ff"/><path d="M1258 253 L1274 250 M1258 253 L1274 256" stroke="#ff0000"/><path d="M1258 253 L1274 253" stroke="#000"/><path d="M1258 253 L1270 262" stroke="#008000"/><rect x="1259.5" y="267.5" width="13" height="13" fill="#fff" stroke="#000"/><path d="M1260 270.5 H1272 M1260 273.5 H1272 M1260 276.5 H1272 M1262.5 268 V280 M1265.5 268 V280 M1268.5 268 V280" stroke="#707070" stroke-dasharray="1 1"/><ellipse cx="1265.5" cy="292" rx="7" ry="4" fill="#00ffff" stroke="#ff0000" stroke-width="1.3"/><text x="1258" y="303" font-family="Liberation Sans" font-weight="bold" font-size="8" textLength="15" lengthAdjust="spacingAndGlyphs" fill="#000">ELIPS</text><path d="M1257 327 L1270 317" stroke="#0000ff" stroke-width="1.2"/><path d="M1262 315 L1273 326" stroke="#000080" stroke-width="1.2"/><path d="M1259 320 L1266 314 M1261 322 L1268 316" stroke="#800000"/><path d="M1263 323 L1270 317" stroke="#008000"/><text x="1265.5" y="346" text-anchor="middle" font-family="Liberation Sans" font-weight="bold" font-size="10" fill="#000">PTI</text><rect x="1260.5" y="355.5" width="13" height="12" fill="#fff" stroke="#0000ff" stroke-width="1.5"/><path d="M1260 359.5 H1273 M1260 363.5 H1273 M1263.5 356 V367 M1266.5 356 V367 M1269.5 356 V367" stroke="#0000ff" stroke-width="1.5"/><rect x="1258" y="378" width="15" height="3" fill="#ff00ff"/><rect x="1258" y="381" width="15" height="3" fill="#00ffff"/><text x="1258" y="393" font-family="Liberation Sans" font-size="9.5" textLength="15" lengthAdjust="spacingAndGlyphs" fill="#000">MOB</text><circle cx="1268" cy="404" r="5.5" fill="#d0ffd0" stroke="#000"/><text x="1268" y="408" text-anchor="middle" font-family="Liberation Sans" font-weight="bold" font-size="9" fill="#008000">1</text><path d="M1258 414 L1263 409" stroke="#000" stroke-dasharray="1 1"/><text x="1265.5" y="436" text-anchor="middle" font-family="Liberation Serif" font-weight="bold" font-size="16" fill="#000">A</text><circle cx="1264" cy="449" r="4.5" fill="#fff" stroke="#000" stroke-width="1.3"/><path d="M1262 449 H1266 M1264 447 V451" stroke="#000"/><path d="M1267 452 L1272 457" stroke="#000" stroke-width="2"/><path d="M1259 474 L1264 470 L1273 480 L1268 484 Z" fill="#ffff00" stroke="#000"/><path d="M1259 474 L1264 470 L1267 473 L1262 477 Z" fill="#c00000"/><rect x="1259" y="493" width="13" height="13" fill="none" stroke="#000" stroke-dasharray="2 2"/><path d="M1261 495 L1264 498 M1270 495 L1267 498 M1261 504 L1264 501 M1270 504 L1267 501" stroke="#000"/><rect x="1259" y="515" width="8" height="11" fill="#fff" stroke="#000"/><rect x="1263" y="517" width="9" height="11" fill="#fff" stroke="#000"/><path d="M1265 520 H1270 M1265 523 H1270 M1265 526 H1270" stroke="#000"/><path d="M1260 542 L1260 552 Q1260 557 1265.5 557 Q1271 557 1271 552 L1271 542 L1268 542 L1268 552 Q1268 554 1265.5 554 Q1263 554 1263 552 L1263 542 Z" fill="#ff0000" stroke="#800000" stroke-width="0.8"/></svg>
<svg width="1280" height="983" style="left:0;top:0"><defs><clipPath id="cc"><rect x="78" y="98" width="1110" height="651"/></clipPath><clipPath id="oc"><rect x="78" y="755" width="1110" height="166"/></clipPath></defs><g clip-path="url(#cc)" shape-rendering="crispEdges"><line x1="297" y1="198.5" x2="550" y2="198.5" stroke="#b0b0b0" stroke-width="1"/><line x1="353" y1="203.5" x2="550" y2="203.5" stroke="#b0b0b0" stroke-width="1"/><line x1="381" y1="209.5" x2="550" y2="209.5" stroke="#808080" stroke-width="1"/><line x1="402" y1="215.5" x2="550" y2="215.5" stroke="#b0b0b0" stroke-width="1"/><line x1="409" y1="221.5" x2="550" y2="221.5" stroke="#b0b0b0" stroke-width="1"/><line x1="444" y1="227.5" x2="550" y2="227.5" stroke="#808080" stroke-width="1"/><line x1="486" y1="233.5" x2="550" y2="233.5" stroke="#b0b0b0" stroke-width="1"/><line x1="213" y1="237.5" x2="480" y2="237.5" stroke="#b0b0b0" stroke-width="1"/><line x1="528" y1="237.5" x2="550" y2="237.5" stroke="#808080" stroke-width="1"/><line x1="542" y1="243.5" x2="549" y2="243.5" stroke="#808080" stroke-width="1"/><line x1="556" y1="198.5" x2="808" y2="198.5" stroke="#b0b0b0" stroke-width="1"/><line x1="556" y1="203.5" x2="753" y2="203.5" stroke="#b0b0b0" stroke-width="1"/><line x1="556" y1="209.5" x2="725" y2="209.5" stroke="#808080" stroke-width="1"/><line x1="556" y1="215.5" x2="704" y2="215.5" stroke="#b0b0b0" stroke-width="1"/><line x1="556" y1="221.5" x2="697" y2="221.5" stroke="#b0b0b0" stroke-width="1"/><line x1="556" y1="226.5" x2="662" y2="226.5" stroke="#808080" stroke-width="1"/><line x1="556" y1="232.5" x2="620" y2="232.5" stroke="#b0b0b0" stroke-width="1"/><line x1="556" y1="238.5" x2="578" y2="238.5" stroke="#808080" stroke-width="1"/><line x1="556" y1="242.5" x2="564" y2="242.5" stroke="#b0b0b0" stroke-width="1"/><line x1="79" y1="206.5" x2="137" y2="206.5" stroke="#b0b0b0" stroke-width="1"/><line x1="79" y1="211.5" x2="88" y2="211.5" stroke="#808080" stroke-width="1"/><line x1="79" y1="235.5" x2="207" y2="235.5" stroke="#b0b0b0" stroke-width="1"/><line x1="79" y1="241.5" x2="207" y2="241.5" stroke="#b0b0b0" stroke-width="1"/><line x1="79" y1="247.5" x2="207" y2="247.5" stroke="#b0b0b0" stroke-width="1"/><line x1="79" y1="252.0" x2="208" y2="252.0" stroke="#808080" stroke-width="2"/><line x1="80" y1="259.5" x2="207" y2="259.5" stroke="#808080" stroke-width="1"/><line x1="136" y1="263.5" x2="207" y2="263.5" stroke="#808080" stroke-width="1"/><line x1="143" y1="267.5" x2="207" y2="267.5" stroke="#b0b0b0" stroke-width="1"/><line x1="185" y1="271.5" x2="207" y2="271.5" stroke="#b0b0b0" stroke-width="1"/><line x1="80" y1="274.5" x2="102" y2="274.5" stroke="#b0b0b0" stroke-width="1"/><line x1="115" y1="272.5" x2="137" y2="272.5" stroke="#b0b0b0" stroke-width="1"/><line x1="213" y1="242.5" x2="480" y2="242.5" stroke="#b0b0b0" stroke-width="1"/><line x1="213" y1="247.5" x2="417" y2="247.5" stroke="#b0b0b0" stroke-width="1"/><line x1="213" y1="252.0" x2="369" y2="252.0" stroke="#808080" stroke-width="2"/><line x1="213" y1="258.5" x2="340" y2="258.5" stroke="#808080" stroke-width="1"/><line x1="213" y1="263.5" x2="284" y2="263.5" stroke="#808080" stroke-width="1"/><line x1="213" y1="268.5" x2="277" y2="268.5" stroke="#b0b0b0" stroke-width="1"/><line x1="213" y1="272.5" x2="235" y2="272.5" stroke="#b0b0b0" stroke-width="1"/><line x1="79" y1="292.5" x2="123" y2="292.5" stroke="#b0b0b0" stroke-width="1"/><line x1="94" y1="298.5" x2="123" y2="298.5" stroke="#b0b0b0" stroke-width="1"/><line x1="129" y1="290.5" x2="172" y2="290.5" stroke="#b0b0b0" stroke-width="1"/><line x1="129" y1="296.5" x2="158" y2="296.5" stroke="#b0b0b0" stroke-width="1"/><line x1="136" y1="330.5" x2="185" y2="330.5" stroke="#b0b0b0" stroke-width="1"/><line x1="143" y1="334.5" x2="185" y2="334.5" stroke="#b0b0b0" stroke-width="1"/><line x1="185" y1="328.5" x2="228" y2="328.5" stroke="#b0b0b0" stroke-width="1"/><line x1="185" y1="332.5" x2="221" y2="332.5" stroke="#b0b0b0" stroke-width="1"/><line x1="472" y1="599.5" x2="500" y2="599.5" stroke="#a0a0a0" stroke-width="1"/><line x1="507" y1="596.5" x2="536" y2="596.5" stroke="#a0a0a0" stroke-width="1"/><line x1="507" y1="602.5" x2="522" y2="602.5" stroke="#a0a0a0" stroke-width="1"/><line x1="486" y1="605.5" x2="500" y2="605.5" stroke="#808080" stroke-width="1"/><line x1="736" y1="198.5" x2="808" y2="198.5" stroke="#b0b0b0" stroke-width="1"/><line x1="740" y1="203.5" x2="753" y2="203.5" stroke="#b0b0b0" stroke-width="1"/><line x1="108" y1="277" x2="108" y2="312" stroke="#808080" stroke-width="2"/><line x1="122" y1="300" x2="122" y2="335" stroke="#808080" stroke-width="2"/><line x1="206" y1="273" x2="206" y2="308" stroke="#808080" stroke-width="2"/><line x1="185" y1="335" x2="185" y2="369" stroke="#808080" stroke-width="2"/><line x1="549" y1="243" x2="549" y2="278" stroke="#808080" stroke-width="2"/><line x1="500" y1="605" x2="500" y2="640" stroke="#808080" stroke-width="2"/><line x1="808" y1="212.5" x2="865" y2="212.5" stroke="#ff0000" stroke-width="1"/><line x1="808" y1="326.5" x2="865" y2="326.5" stroke="#ff0000" stroke-width="1"/><line x1="808" y1="437.5" x2="865" y2="437.5" stroke="#ff0000" stroke-width="1"/><line x1="808" y1="649.5" x2="865" y2="649.5" stroke="#ff0000" stroke-width="1"/></g><g clip-path="url(#cc)" shape-rendering="crispEdges"><polyline points="80.9,618.7 97.3,612.0 124.4,610.0 143.7,606.2 164.9,610.0 193.9,615.8 213.2,620.6 240.0,623.5 298.0,615.8 352.0,600.4 375.2,589.7 400.0,577.2 419.3,571.4 448.3,560.7 471.5,560.7 496.6,563.6 535.2,562.1 554.6,567.5 570.0,571.4 579.3,573.3 608.3,575.3 637.3,574.9 656.6,569.5 695.3,556.0 733.9,545.3 752.3,540.9" fill="none" stroke="#008080" stroke-width="1" stroke-linejoin="round" /><polyline points="80.0,420.0 95.3,420.6 147.2,428.4 199.0,437.9 240.0,446.8 298.0,460.3 355.9,470.9 410.0,476.7 458.0,478.6 570.0,480.6 618.0,483.5 637.3,484.4 676.0,477.7 714.6,472.8 752.3,469.0" fill="none" stroke="#0000ff" stroke-width="1" stroke-linejoin="round" /><polyline points="80.0,416.0 130.0,418.0 182.0,423.0 248.0,427.5 330.0,428.5 480.0,427.0 560.0,429.0 752.0,427.5" fill="none" stroke="#00ffff" stroke-width="1" stroke-linejoin="round" /><polyline points="81.0,402.4 95.3,399.0 112.6,399.0 138.5,392.0 152.4,392.9 181.8,399.0 206.0,405.0 226.7,409.3 240.0,411.0 257.3,411.0 274.6,406.7 291.9,402.4 309.2,400.7 326.5,393.8 343.8,387.7 361.1,381.7 378.4,371.3 395.7,362.6 420.8,350.5 443.2,341.9 469.2,341.0 503.8,344.5 529.7,343.6 555.7,349.7 577.3,354.9 603.3,357.1 634.4,356.6 648.2,354.9 663.8,348.0 689.8,340.2 715.7,330.7 738.2,322.0 752.0,320.3" fill="none" stroke="#ff0000" stroke-width="1" stroke-linejoin="round" /><polyline points="81.1,366.1 84.9,365.8 95.3,371.3 108.3,380.0 115.2,400.7 129.9,400.7 147.2,398.0 161.0,386.9 172.3,378.2 181.8,380.0 192.1,384.3 206.0,382.5 219.8,407.6 233.7,433.5 240.0,437.0 257.3,442.2 274.6,450.8 291.9,443.9 305.7,440.5 316.1,428.4 330.0,411.0 343.8,395.5 361.1,383.4 371.4,362.6 378.4,354.0 388.7,347.1 395.7,338.4 400.0,336.7 417.3,331.5 431.1,323.7 439.8,324.6 450.2,336.7 469.2,334.1 486.5,327.2 500.3,322.0 510.7,326.3 521.1,336.7 529.7,342.7 541.8,354.0 555.7,350.5 560.0,355.7 570.4,373.0 580.8,395.5 591.1,409.4 611.9,413.7 634.4,414.2 650.0,402.5 663.8,386.9 681.1,362.7 698.4,351.4 715.7,337.6 739.9,322.0 752.0,326.3" fill="none" stroke="#800000" stroke-width="1" stroke-linejoin="round" /><polyline points="81.5,393.8 87.5,387.7 93.6,393.8 107.4,424.9 123.0,436.0 133.3,428.4 141.1,419.7 143.7,420.6 150.6,435.3 159.2,464.2 170.0,489.9 178.5,487.7 187.7,496.3 200.6,502.7 206.3,514.8 213.4,509.8 224.8,508.4 241.9,511.9 250.4,499.8 263.2,479.9 273.2,464.2 281.5,438.7 290.2,432.7 298.8,440.5 305.7,449.1 316.1,426.6 330.0,414.5 343.8,390.3 354.1,397.2 364.5,381.7 374.9,352.3 383.6,347.1 395.7,338.4 404.3,341.9 413.8,354.0 436.3,340.2 445.0,345.3 457.1,366.1 469.2,390.3 477.8,404.1 489.9,414.5 502.0,426.6 509.0,424.9 519.3,404.1 533.2,411.0 543.5,431.8 555.0,460.0 570.0,462.0 585.0,450.0 598.0,439.7 611.9,442.2 634.4,431.9 643.0,411.1 653.4,397.3 663.8,371.3 672.5,366.1 684.6,359.2 698.4,356.6 703.6,355.7 715.7,340.2 733.0,331.5 739.9,331.5 752.0,335.8" fill="none" stroke="#ff8000" stroke-width="1" stroke-linejoin="round" /><polyline points="81.9,457.4 87.7,451.6 97.3,465.0 108.9,490.2 122.4,498.0 141.8,483.5 150.0,500.0 165.0,530.0 187.7,556.8 197.7,562.5 206.3,574.6 216.2,569.6 224.8,568.2 234.7,567.5 241.9,572.5 250.4,562.5 259.0,552.5 273.2,526.9 285.0,508.4 290.2,496.0 305.7,503.8 317.3,492.2 336.6,480.6 343.8,459.5 361.1,445.7 374.9,414.5 383.6,412.8 395.7,404.1 404.3,407.6 417.3,416.3 434.6,402.4 451.9,423.2 469.2,456.0 486.9,472.8 504.3,490.2 521.7,468.0 535.2,475.7 546.8,488.3 554.6,517.3 560.4,526.0 571.6,529.9 579.3,521.2 598.6,501.8 612.2,504.7 633.4,496.0 645.0,478.6 660.5,440.0 663.8,437.0 681.1,428.4 698.4,421.5 703.6,423.2 715.7,411.1 733.0,399.0 739.9,398.1 752.0,400.7" fill="none" stroke="#ff8000" stroke-width="1" stroke-linejoin="round" /><polyline points="80.3,596.5 89.6,575.2 107.0,536.6 115.7,503.8 124.4,505.7 145.6,503.8 155.3,511.5 174.6,546.3 193.9,573.3 205.5,591.7 224.8,588.8 232.6,587.8 242.2,592.6 259.3,591.7 274.8,585.9 292.2,588.8 307.6,583.0 319.2,584.0 338.5,577.2 355.9,557.9 373.3,546.3 381.0,528.9 394.6,513.4 411.6,499.9 430.9,491.2 438.6,474.8 444.4,455.5 452.2,448.7 463.8,453.5 471.5,455.5 481.1,463.2 492.7,470.9 500.5,482.5 508.2,491.2 519.8,490.2 531.4,494.1 539.1,496.0 546.8,507.6 554.6,525.0 564.2,532.7 569.7,536.0 579.3,529.9 594.8,526.0 608.3,527.9 643.1,528.9 656.6,538.6 676.0,546.3 683.7,544.3 695.3,523.1 714.6,505.7 737.8,485.4 752.3,460.3" fill="none" stroke="#000000" stroke-width="1" stroke-linejoin="round" /><polyline points="81.1,405.9 88.4,395.5 98.8,388.6 115.2,382.5 129.9,381.0 138.5,379.5 152.4,381.7 164.5,388.6 178.3,395.5 192.1,407.6 206.0,414.5 216.4,424.9 230.2,437.9 244.0,444.8 257.3,448.2 274.6,450.0 291.9,445.7 309.2,440.5 323.0,431.8 336.9,421.4 352.4,407.6 369.7,386.9 387.0,362.6 400.0,350.5 417.3,341.9 434.6,331.5 450.2,319.4 469.2,320.3 486.5,325.5 503.8,331.5 521.1,341.0 534.9,350.5 547.0,360.9 559.1,371.3 573.8,383.4 589.4,395.2 611.9,399.0 634.4,399.9 651.7,393.8 672.5,386.9 686.3,376.5 707.1,356.6 724.4,341.9 741.7,327.2 752.0,320.3" fill="none" stroke="#a0a0a0" stroke-width="3" stroke-linejoin="round" /><polyline points="80.9,547.2 89.6,534.7 101.2,527.9 114.7,520.2 141.8,519.2 159.1,523.0 184.3,536.6 213.2,561.7 232.6,577.2 248.0,582.0 259.3,583.0 282.5,584.5 303.8,578.1 327.0,567.5 346.3,552.0 365.6,530.8 384.9,507.6 400.0,493.0 419.3,482.5 438.6,469.0 450.2,463.2 471.5,463.2 486.9,469.0 506.3,477.7 525.6,485.4 539.1,492.2 554.6,505.7 560.0,512.5 575.5,528.9 589.0,534.7 618.0,538.2 637.3,537.6 656.6,531.8 676.0,523.1 695.3,505.7 714.6,490.2 733.9,477.7 752.3,463.2" fill="none" stroke="#a0a0a0" stroke-width="3" stroke-linejoin="round" /><polyline points="80.9,478.7 97.3,459.7 116.6,446.7 141.8,444.7 174.6,461.2 193.9,472.7 222.9,499.7 248.0,509.7 259.3,513.0 274.8,514.9 298.0,510.1 317.3,499.5 336.6,486.9 355.9,466.6 375.2,441.5 400.0,418.9 417.3,410.2 434.6,399.8 451.9,389.5 469.2,389.5 486.5,393.8 503.8,399.8 521.1,408.5 538.4,420.6 561.9,438.3 584.2,458.5 593.2,464.1 629.0,465.2 650.0,457.7 663.8,453.7 698.4,434.5 733.0,406.8 752.0,390.4" fill="none" stroke="#00ffff" stroke-width="1" stroke-linejoin="round" /><polyline points="80.9,487.9 97.3,468.9 116.6,455.9 141.8,453.9 174.6,470.4 193.9,481.9 222.9,508.9 248.0,518.9 259.3,522.2 274.8,524.1 298.0,519.3 317.3,508.7 336.6,496.1 355.9,475.8 375.2,450.7 400.0,428.1 417.3,419.4 434.6,409.0 451.9,398.7 469.2,398.7 486.5,403.0 503.8,409.0 521.1,417.7 538.4,429.8 561.9,447.5 584.2,467.7 593.2,473.3 629.0,474.4 650.0,466.9 663.8,462.9 698.4,443.7 733.0,416.0 752.0,399.6" fill="none" stroke="#00ffff" stroke-width="1" stroke-linejoin="round" /><polyline points="80.9,482.5 97.3,463.5 116.6,450.5 141.8,448.5 174.6,465.0 193.9,476.5 222.9,503.5 248.0,513.5 259.3,516.8 274.8,518.7 298.0,513.9 317.3,503.3 336.6,490.7 355.9,470.4 375.2,445.3 400.0,422.7 417.3,414.0 434.6,403.6 451.9,393.3 469.2,393.3 486.5,397.6 503.8,403.6 521.1,412.3 538.4,424.4 561.9,442.1 584.2,462.3 593.2,467.9 629.0,469.0 650.0,461.5 663.8,457.5 698.4,438.3 733.0,410.6 752.0,394.2" fill="none" stroke="#ffff00" stroke-width="2" stroke-linejoin="round" /><polyline points="80.9,483.8 97.3,464.8 116.6,451.8 141.8,449.8 174.6,466.3 193.9,477.8 222.9,504.8 248.0,514.8 259.3,518.1 274.8,520.0 298.0,515.2 317.3,504.6 336.6,492.0 355.9,471.7 375.2,446.6 400.0,424.0 417.3,415.3 434.6,404.9 451.9,394.6 469.2,394.6 486.5,398.9 503.8,404.9 521.1,413.6 538.4,425.7 561.9,443.4 584.2,463.6 593.2,469.2 629.0,470.3 650.0,462.8 663.8,458.8 698.4,439.6 733.0,411.9 752.0,395.5" fill="none" stroke="#006060" stroke-width="1" stroke-linejoin="round" /><polyline points="80.9,504.7 97.3,498.0 116.6,496.0 141.8,491.8 159.1,494.1 184.3,498.9 213.2,505.7 248.0,509.6 259.3,508.6 278.6,504.7 298.0,500.9 317.3,498.0 336.6,491.2 355.9,484.4 375.2,473.8 394.6,464.2 410.0,457.4 425.9,449.1 451.9,442.2 469.2,443.0 503.8,445.7 538.4,444.0 555.7,449.1 570.0,453.5 579.3,457.4 618.0,457.4 637.3,458.4 656.6,453.5 676.0,447.7 699.0,440.0 724.4,431.0 752.0,422.4" fill="none" stroke="#000000" stroke-width="3" stroke-linejoin="round" /><polyline points="80.0,409.8 87.0,406.2 94.0,417.6 101.0,435.9 108.0,449.6 115.0,453.1 122.0,460.9 129.0,455.6 136.0,446.5 143.0,445.0 150.0,462.7 157.0,482.8 164.0,502.5 171.0,515.2 178.0,512.8 185.0,521.8 192.0,523.5 199.0,527.6 206.0,539.1 213.0,534.2 220.0,532.9 227.0,534.8 234.0,530.7 241.0,536.4 248.0,523.8 255.0,515.9 262.0,505.6 269.0,489.1 276.0,475.7 283.0,463.7 290.0,457.2 297.0,464.6 304.0,475.2 311.0,468.3 318.0,454.8 325.0,446.4 332.0,441.0 339.0,429.1 346.0,419.1 353.0,422.4 360.0,413.5 367.0,399.4 374.0,378.8 381.0,373.1 388.0,374.2 395.0,365.0 402.0,367.5 409.0,375.9 416.0,380.0 423.0,373.9 430.0,370.1 437.0,365.2 444.0,372.9 451.0,380.1 458.0,400.4 465.0,415.0 472.0,420.8 479.0,432.6 486.0,438.2 493.0,444.2 500.0,451.8 507.0,451.2 514.0,438.7 521.0,429.8 528.0,435.6 535.0,438.3 542.0,454.1 549.0,475.3 556.0,490.6 563.0,488.5 570.0,492.5 577.0,482.2 584.0,483.5 591.0,478.0 598.0,464.7 605.0,468.1 612.0,468.2 619.0,464.0 626.0,460.1 633.0,458.6 640.0,446.9 647.0,434.7 654.0,415.6 661.0,400.1 668.0,394.3 675.0,392.3 682.0,388.1 689.0,384.6 696.0,382.5 703.0,384.0 710.0,374.9 717.0,370.3 724.0,364.8 731.0,360.6 738.0,357.6 745.0,360.3 752.0,361.3" fill="none" stroke="#ff00ff" stroke-width="1" stroke-linejoin="round" /><polyline points="80.0,421.8 87.0,418.2 94.0,429.6 101.0,447.9 108.0,461.6 115.0,465.1 122.0,472.9 129.0,467.6 136.0,458.5 143.0,457.0 150.0,474.7 157.0,494.8 164.0,514.5 171.0,527.2 178.0,524.8 185.0,533.8 192.0,535.5 199.0,539.6 206.0,551.1 213.0,546.2 220.0,544.9 227.0,546.8 234.0,542.7 241.0,548.4 248.0,535.8 255.0,527.9 262.0,517.6 269.0,501.1 276.0,487.7 283.0,475.7 290.0,469.2 297.0,476.6 304.0,487.2 311.0,480.3 318.0,466.8 325.0,458.4 332.0,453.0 339.0,441.1 346.0,431.1 353.0,434.4 360.0,425.5 367.0,411.4 374.0,390.8 381.0,385.1 388.0,386.2 395.0,377.0 402.0,379.5 409.0,387.9 416.0,392.0 423.0,385.9 430.0,382.1 437.0,377.2 444.0,384.9 451.0,392.1 458.0,412.4 465.0,427.0 472.0,432.8 479.0,444.6 486.0,450.2 493.0,456.2 500.0,463.8 507.0,463.2 514.0,450.7 521.0,441.8 528.0,447.6 535.0,450.3 542.0,466.1 549.0,487.3 556.0,502.6 563.0,500.5 570.0,504.5 577.0,494.2 584.0,495.5 591.0,490.0 598.0,476.7 605.0,480.1 612.0,480.2 619.0,476.0 626.0,472.1 633.0,470.6 640.0,458.9 647.0,446.7 654.0,427.6 661.0,412.1 668.0,406.3 675.0,404.3 682.0,400.1 689.0,396.6 696.0,394.5 703.0,396.0 710.0,386.9 717.0,382.3 724.0,376.8 731.0,372.6 738.0,369.6 745.0,372.3 752.0,373.3" fill="none" stroke="#ff00ff" stroke-width="1" stroke-linejoin="round" /><polyline points="80.0,415.8 87.0,412.2 94.0,423.6 101.0,441.9 108.0,455.6 115.0,459.1 122.0,466.9 129.0,461.6 136.0,452.5 143.0,451.0 150.0,468.7 157.0,488.8 164.0,508.5 171.0,521.2 178.0,518.8 185.0,527.8 192.0,529.5 199.0,533.6 206.0,545.1 213.0,540.2 220.0,538.9 227.0,540.8 234.0,536.7 241.0,542.4 248.0,529.8 255.0,521.9 262.0,511.6 269.0,495.1 276.0,481.7 283.0,469.7 290.0,463.2 297.0,470.6 304.0,481.2 311.0,474.3 318.0,460.8 325.0,452.4 332.0,447.0 339.0,435.1 346.0,425.1 353.0,428.4 360.0,419.5 367.0,405.4 374.0,384.8 381.0,379.1 388.0,380.2 395.0,371.0 402.0,373.5 409.0,381.9 416.0,386.0 423.0,379.9 430.0,376.1 437.0,371.2 444.0,378.9 451.0,386.1 458.0,406.4 465.0,421.0 472.0,426.8 479.0,438.6 486.0,444.2 493.0,450.2 500.0,457.8 507.0,457.2 514.0,444.7 521.0,435.8 528.0,441.6 535.0,444.3 542.0,460.1 549.0,481.3 556.0,496.6 563.0,494.5 570.0,498.5 577.0,488.2 584.0,489.5 591.0,484.0 598.0,470.7 605.0,474.1 612.0,474.2 619.0,470.0 626.0,466.1 633.0,464.6 640.0,452.9 647.0,440.7 654.0,421.6 661.0,406.1 668.0,400.3 675.0,398.3 682.0,394.1 689.0,390.6 696.0,388.5 703.0,390.0 710.0,380.9 717.0,376.3 724.0,370.8 731.0,366.6 738.0,363.6 745.0,366.3 752.0,367.3" fill="none" stroke="#00ff00" stroke-width="1" stroke-linejoin="round" /></g><g clip-path="url(#cc)" shape-rendering="crispEdges"><line x1="80.5" y1="389" x2="80.5" y2="396" stroke="#0000ff" stroke-width="1"/><line x1="80.5" y1="403" x2="80.5" y2="417" stroke="#0000ff" stroke-width="1"/><rect x="78" y="396" width="5" height="7" fill="#0000ff"/><line x1="87.5" y1="400" x2="87.5" y2="405" stroke="#0000ff" stroke-width="1"/><line x1="87.5" y1="424" x2="87.5" y2="430" stroke="#0000ff" stroke-width="1"/><rect x="85.5" y="405.5" width="4" height="18" fill="none" stroke="#0000ff" stroke-width="1"/><line x1="94.5" y1="416" x2="94.5" y2="416" stroke="#0000ff" stroke-width="1"/><line x1="94.5" y1="447" x2="94.5" y2="454" stroke="#0000ff" stroke-width="1"/><rect x="92" y="416" width="5" height="31" fill="#0000ff"/><line x1="101.5" y1="445" x2="101.5" y2="447" stroke="#0000ff" stroke-width="1"/><line x1="101.5" y1="480" x2="101.5" y2="492" stroke="#0000ff" stroke-width="1"/><rect x="99" y="447" width="5" height="33" fill="#0000ff"/><line x1="108.5" y1="473" x2="108.5" y2="483" stroke="#000000" stroke-width="1"/><line x1="108.5" y1="484" x2="108.5" y2="493" stroke="#000000" stroke-width="1"/><rect x="106" y="483" width="5" height="2" fill="#000000"/><line x1="115.5" y1="460" x2="115.5" y2="466" stroke="#0000ff" stroke-width="1"/><line x1="115.5" y1="476" x2="115.5" y2="482" stroke="#0000ff" stroke-width="1"/><rect x="113.5" y="466.5" width="4" height="9" fill="none" stroke="#0000ff" stroke-width="1"/><line x1="122.5" y1="458" x2="122.5" y2="471" stroke="#0000ff" stroke-width="1"/><line x1="122.5" y1="484" x2="122.5" y2="483" stroke="#0000ff" stroke-width="1"/><rect x="120" y="471" width="5" height="13" fill="#0000ff"/><line x1="129.5" y1="450" x2="129.5" y2="451" stroke="#000000" stroke-width="1"/><line x1="129.5" y1="480" x2="129.5" y2="481" stroke="#000000" stroke-width="1"/><rect x="127.5" y="451.5" width="4" height="28" fill="none" stroke="#000000" stroke-width="1"/><line x1="136.5" y1="388" x2="136.5" y2="406" stroke="#0000ff" stroke-width="1"/><line x1="136.5" y1="435" x2="136.5" y2="449" stroke="#0000ff" stroke-width="1"/><rect x="134" y="406" width="5" height="29" fill="#0000ff"/><line x1="143.5" y1="415" x2="143.5" y2="436" stroke="#0000ff" stroke-width="1"/><line x1="143.5" y1="449" x2="143.5" y2="465" stroke="#0000ff" stroke-width="1"/><rect x="141" y="436" width="5" height="13" fill="#0000ff"/><line x1="150.5" y1="469" x2="150.5" y2="469" stroke="#000000" stroke-width="1"/><line x1="150.5" y1="505" x2="150.5" y2="514" stroke="#000000" stroke-width="1"/><rect x="148" y="469" width="5" height="36" fill="#000000"/><line x1="157.5" y1="498" x2="157.5" y2="507" stroke="#000000" stroke-width="1"/><line x1="157.5" y1="530" x2="157.5" y2="542" stroke="#000000" stroke-width="1"/><rect x="155" y="507" width="5" height="23" fill="#000000"/><line x1="164.5" y1="528" x2="164.5" y2="528" stroke="#000000" stroke-width="1"/><line x1="164.5" y1="549" x2="164.5" y2="557" stroke="#000000" stroke-width="1"/><rect x="162" y="528" width="5" height="21" fill="#000000"/><line x1="171.5" y1="536" x2="171.5" y2="546" stroke="#000000" stroke-width="1"/><line x1="171.5" y1="553" x2="171.5" y2="561" stroke="#000000" stroke-width="1"/><rect x="169.5" y="546.5" width="4" height="6" fill="none" stroke="#000000" stroke-width="1"/><line x1="178.5" y1="508" x2="178.5" y2="514" stroke="#000000" stroke-width="1"/><line x1="178.5" y1="537" x2="178.5" y2="536" stroke="#000000" stroke-width="1"/><rect x="176.5" y="514.5" width="4" height="22" fill="none" stroke="#000000" stroke-width="1"/><line x1="185.5" y1="528" x2="185.5" y2="528" stroke="#ff0000" stroke-width="1"/><line x1="185.5" y1="547" x2="185.5" y2="578" stroke="#ff0000" stroke-width="1"/><rect x="183" y="528" width="5" height="19" fill="#ff0000"/><line x1="192.5" y1="533" x2="192.5" y2="533" stroke="#ff0000" stroke-width="1"/><line x1="192.5" y1="551" x2="192.5" y2="560" stroke="#ff0000" stroke-width="1"/><rect x="190.5" y="533.5" width="4" height="17" fill="none" stroke="#ff0000" stroke-width="1"/><line x1="199.5" y1="532" x2="199.5" y2="534" stroke="#000000" stroke-width="1"/><line x1="199.5" y1="543" x2="199.5" y2="551" stroke="#000000" stroke-width="1"/><rect x="197" y="534" width="5" height="9" fill="#000000"/><line x1="206.5" y1="531" x2="206.5" y2="542" stroke="#ff0000" stroke-width="1"/><line x1="206.5" y1="569" x2="206.5" y2="568" stroke="#ff0000" stroke-width="1"/><rect x="204" y="542" width="5" height="27" fill="#ff0000"/><line x1="213.5" y1="526" x2="213.5" y2="531" stroke="#ff0000" stroke-width="1"/><line x1="213.5" y1="556" x2="213.5" y2="555" stroke="#ff0000" stroke-width="1"/><rect x="211.5" y="531.5" width="4" height="24" fill="none" stroke="#ff0000" stroke-width="1"/><line x1="220.5" y1="536" x2="220.5" y2="536" stroke="#ff0000" stroke-width="1"/><line x1="220.5" y1="542" x2="220.5" y2="557" stroke="#ff0000" stroke-width="1"/><rect x="218.5" y="536.5" width="4" height="5" fill="none" stroke="#ff0000" stroke-width="1"/><line x1="227.5" y1="514" x2="227.5" y2="528" stroke="#ff0000" stroke-width="1"/><line x1="227.5" y1="546" x2="227.5" y2="562" stroke="#ff0000" stroke-width="1"/><rect x="225" y="528" width="5" height="18" fill="#ff0000"/><line x1="234.5" y1="516" x2="234.5" y2="528" stroke="#000000" stroke-width="1"/><line x1="234.5" y1="537" x2="234.5" y2="550" stroke="#000000" stroke-width="1"/><rect x="232.5" y="528.5" width="4" height="8" fill="none" stroke="#000000" stroke-width="1"/><line x1="241.5" y1="536" x2="241.5" y2="536" stroke="#ff0000" stroke-width="1"/><line x1="241.5" y1="555" x2="241.5" y2="557" stroke="#ff0000" stroke-width="1"/><rect x="239" y="536" width="5" height="19" fill="#ff0000"/><line x1="248.5" y1="498" x2="248.5" y2="505" stroke="#ff0000" stroke-width="1"/><line x1="248.5" y1="546" x2="248.5" y2="553" stroke="#ff0000" stroke-width="1"/><rect x="246.5" y="505.5" width="4" height="40" fill="none" stroke="#ff0000" stroke-width="1"/><line x1="255.5" y1="473" x2="255.5" y2="496" stroke="#000000" stroke-width="1"/><line x1="255.5" y1="507" x2="255.5" y2="507" stroke="#000000" stroke-width="1"/><rect x="253" y="496" width="5" height="11" fill="#000000"/><line x1="262.5" y1="491" x2="262.5" y2="491" stroke="#000000" stroke-width="1"/><line x1="262.5" y1="510" x2="262.5" y2="515" stroke="#000000" stroke-width="1"/><rect x="260.5" y="491.5" width="4" height="18" fill="none" stroke="#000000" stroke-width="1"/><line x1="269.5" y1="462" x2="269.5" y2="462" stroke="#000000" stroke-width="1"/><line x1="269.5" y1="485" x2="269.5" y2="488" stroke="#000000" stroke-width="1"/><rect x="267.5" y="462.5" width="4" height="22" fill="none" stroke="#000000" stroke-width="1"/><line x1="276.5" y1="447" x2="276.5" y2="455" stroke="#000000" stroke-width="1"/><line x1="276.5" y1="459" x2="276.5" y2="481" stroke="#000000" stroke-width="1"/><rect x="274.5" y="455.5" width="4" height="3" fill="none" stroke="#000000" stroke-width="1"/><line x1="283.5" y1="444" x2="283.5" y2="446" stroke="#000000" stroke-width="1"/><line x1="283.5" y1="468" x2="283.5" y2="475" stroke="#000000" stroke-width="1"/><rect x="281.5" y="446.5" width="4" height="21" fill="none" stroke="#000000" stroke-width="1"/><line x1="290.5" y1="437" x2="290.5" y2="446" stroke="#000000" stroke-width="1"/><line x1="290.5" y1="451" x2="290.5" y2="454" stroke="#000000" stroke-width="1"/><rect x="288" y="446" width="5" height="5" fill="#000000"/><line x1="297.5" y1="434" x2="297.5" y2="444" stroke="#000000" stroke-width="1"/><line x1="297.5" y1="486" x2="297.5" y2="486" stroke="#000000" stroke-width="1"/><rect x="295" y="444" width="5" height="42" fill="#000000"/><line x1="304.5" y1="489" x2="304.5" y2="496" stroke="#000000" stroke-width="1"/><line x1="304.5" y1="503" x2="304.5" y2="510" stroke="#000000" stroke-width="1"/><rect x="302" y="496" width="5" height="7" fill="#000000"/><line x1="311.5" y1="460" x2="311.5" y2="460" stroke="#000000" stroke-width="1"/><line x1="311.5" y1="498" x2="311.5" y2="503" stroke="#000000" stroke-width="1"/><rect x="309.5" y="460.5" width="4" height="37" fill="none" stroke="#000000" stroke-width="1"/><line x1="318.5" y1="423" x2="318.5" y2="434" stroke="#000000" stroke-width="1"/><line x1="318.5" y1="458" x2="318.5" y2="462" stroke="#000000" stroke-width="1"/><rect x="316.5" y="434.5" width="4" height="23" fill="none" stroke="#000000" stroke-width="1"/><line x1="325.5" y1="432" x2="325.5" y2="436" stroke="#000000" stroke-width="1"/><line x1="325.5" y1="446" x2="325.5" y2="451" stroke="#000000" stroke-width="1"/><rect x="323.5" y="436.5" width="4" height="9" fill="none" stroke="#000000" stroke-width="1"/><line x1="332.5" y1="434" x2="332.5" y2="436" stroke="#000000" stroke-width="1"/><line x1="332.5" y1="448" x2="332.5" y2="473" stroke="#000000" stroke-width="1"/><rect x="330.5" y="436.5" width="4" height="11" fill="none" stroke="#000000" stroke-width="1"/><line x1="339.5" y1="411" x2="339.5" y2="411" stroke="#0000ff" stroke-width="1"/><line x1="339.5" y1="426" x2="339.5" y2="438" stroke="#0000ff" stroke-width="1"/><rect x="337.5" y="411.5" width="4" height="14" fill="none" stroke="#0000ff" stroke-width="1"/><line x1="346.5" y1="391" x2="346.5" y2="405" stroke="#0000ff" stroke-width="1"/><line x1="346.5" y1="416" x2="346.5" y2="417" stroke="#0000ff" stroke-width="1"/><rect x="344.5" y="405.5" width="4" height="10" fill="none" stroke="#0000ff" stroke-width="1"/><line x1="353.5" y1="409" x2="353.5" y2="417" stroke="#0000ff" stroke-width="1"/><line x1="353.5" y1="436" x2="353.5" y2="437" stroke="#0000ff" stroke-width="1"/><rect x="351" y="417" width="5" height="19" fill="#0000ff"/><line x1="360.5" y1="402" x2="360.5" y2="402" stroke="#0000ff" stroke-width="1"/><line x1="360.5" y1="435" x2="360.5" y2="434" stroke="#0000ff" stroke-width="1"/><rect x="358.5" y="402.5" width="4" height="32" fill="none" stroke="#0000ff" stroke-width="1"/><line x1="367.5" y1="364" x2="367.5" y2="377" stroke="#0000ff" stroke-width="1"/><line x1="367.5" y1="407" x2="367.5" y2="429" stroke="#0000ff" stroke-width="1"/><rect x="365.5" y="377.5" width="4" height="29" fill="none" stroke="#0000ff" stroke-width="1"/><line x1="374.5" y1="334" x2="374.5" y2="343" stroke="#0000ff" stroke-width="1"/><line x1="374.5" y1="357" x2="374.5" y2="365" stroke="#0000ff" stroke-width="1"/><rect x="372.5" y="343.5" width="4" height="13" fill="none" stroke="#0000ff" stroke-width="1"/><line x1="381.5" y1="342" x2="381.5" y2="368" stroke="#0000ff" stroke-width="1"/><line x1="381.5" y1="369" x2="381.5" y2="376" stroke="#0000ff" stroke-width="1"/><rect x="379" y="368" width="5" height="2" fill="#0000ff"/><line x1="388.5" y1="375" x2="388.5" y2="378" stroke="#0000ff" stroke-width="1"/><line x1="388.5" y1="383" x2="388.5" y2="392" stroke="#0000ff" stroke-width="1"/><rect x="386" y="378" width="5" height="5" fill="#0000ff"/><line x1="395.5" y1="346" x2="395.5" y2="352" stroke="#0000ff" stroke-width="1"/><line x1="395.5" y1="386" x2="395.5" y2="395" stroke="#0000ff" stroke-width="1"/><rect x="393.5" y="352.5" width="4" height="33" fill="none" stroke="#0000ff" stroke-width="1"/><line x1="402.5" y1="355" x2="402.5" y2="359" stroke="#0000ff" stroke-width="1"/><line x1="402.5" y1="379" x2="402.5" y2="379" stroke="#0000ff" stroke-width="1"/><rect x="400" y="359" width="5" height="20" fill="#0000ff"/><line x1="409.5" y1="356" x2="409.5" y2="364" stroke="#0000ff" stroke-width="1"/><line x1="409.5" y1="400" x2="409.5" y2="406" stroke="#0000ff" stroke-width="1"/><rect x="407" y="364" width="5" height="36" fill="#0000ff"/><line x1="416.5" y1="392" x2="416.5" y2="394" stroke="#0000ff" stroke-width="1"/><line x1="416.5" y1="408" x2="416.5" y2="411" stroke="#0000ff" stroke-width="1"/><rect x="414.5" y="394.5" width="4" height="13" fill="none" stroke="#0000ff" stroke-width="1"/><line x1="423.5" y1="367" x2="423.5" y2="368" stroke="#0000ff" stroke-width="1"/><line x1="423.5" y1="392" x2="423.5" y2="393" stroke="#0000ff" stroke-width="1"/><rect x="421.5" y="368.5" width="4" height="23" fill="none" stroke="#0000ff" stroke-width="1"/><line x1="430.5" y1="352" x2="430.5" y2="368" stroke="#0000ff" stroke-width="1"/><line x1="430.5" y1="375" x2="430.5" y2="391" stroke="#0000ff" stroke-width="1"/><rect x="428.5" y="368.5" width="4" height="6" fill="none" stroke="#0000ff" stroke-width="1"/><line x1="437.5" y1="362" x2="437.5" y2="362" stroke="#0000ff" stroke-width="1"/><line x1="437.5" y1="377" x2="437.5" y2="381" stroke="#0000ff" stroke-width="1"/><rect x="435.5" y="362.5" width="4" height="14" fill="none" stroke="#0000ff" stroke-width="1"/><line x1="444.5" y1="368" x2="444.5" y2="380" stroke="#0000ff" stroke-width="1"/><line x1="444.5" y1="395" x2="444.5" y2="395" stroke="#0000ff" stroke-width="1"/><rect x="442" y="380" width="5" height="15" fill="#0000ff"/><line x1="451.5" y1="399" x2="451.5" y2="401" stroke="#0000ff" stroke-width="1"/><line x1="451.5" y1="402" x2="451.5" y2="418" stroke="#0000ff" stroke-width="1"/><rect x="449" y="401" width="5" height="2" fill="#0000ff"/><line x1="458.5" y1="424" x2="458.5" y2="425" stroke="#000000" stroke-width="1"/><line x1="458.5" y1="448" x2="458.5" y2="448" stroke="#000000" stroke-width="1"/><rect x="456" y="425" width="5" height="23" fill="#000000"/><line x1="465.5" y1="435" x2="465.5" y2="445" stroke="#000000" stroke-width="1"/><line x1="465.5" y1="451" x2="465.5" y2="456" stroke="#000000" stroke-width="1"/><rect x="463" y="445" width="5" height="6" fill="#000000"/><line x1="472.5" y1="429" x2="472.5" y2="434" stroke="#000000" stroke-width="1"/><line x1="472.5" y1="439" x2="472.5" y2="461" stroke="#000000" stroke-width="1"/><rect x="470" y="434" width="5" height="5" fill="#000000"/><line x1="479.5" y1="457" x2="479.5" y2="460" stroke="#000000" stroke-width="1"/><line x1="479.5" y1="463" x2="479.5" y2="477" stroke="#000000" stroke-width="1"/><rect x="477" y="460" width="5" height="3" fill="#000000"/><line x1="486.5" y1="435" x2="486.5" y2="450" stroke="#000000" stroke-width="1"/><line x1="486.5" y1="456" x2="486.5" y2="460" stroke="#000000" stroke-width="1"/><rect x="484" y="450" width="5" height="6" fill="#000000"/><line x1="493.5" y1="447" x2="493.5" y2="458" stroke="#000000" stroke-width="1"/><line x1="493.5" y1="463" x2="493.5" y2="463" stroke="#000000" stroke-width="1"/><rect x="491" y="458" width="5" height="5" fill="#000000"/><line x1="500.5" y1="462" x2="500.5" y2="466" stroke="#000000" stroke-width="1"/><line x1="500.5" y1="474" x2="500.5" y2="480" stroke="#000000" stroke-width="1"/><rect x="498" y="466" width="5" height="8" fill="#000000"/><line x1="507.5" y1="451" x2="507.5" y2="456" stroke="#000000" stroke-width="1"/><line x1="507.5" y1="481" x2="507.5" y2="486" stroke="#000000" stroke-width="1"/><rect x="505.5" y="456.5" width="4" height="24" fill="none" stroke="#000000" stroke-width="1"/><line x1="514.5" y1="418" x2="514.5" y2="420" stroke="#000000" stroke-width="1"/><line x1="514.5" y1="447" x2="514.5" y2="448" stroke="#000000" stroke-width="1"/><rect x="512.5" y="420.5" width="4" height="26" fill="none" stroke="#000000" stroke-width="1"/><line x1="521.5" y1="401" x2="521.5" y2="414" stroke="#000000" stroke-width="1"/><line x1="521.5" y1="419" x2="521.5" y2="420" stroke="#000000" stroke-width="1"/><rect x="519" y="414" width="5" height="5" fill="#000000"/><line x1="528.5" y1="417" x2="528.5" y2="418" stroke="#000000" stroke-width="1"/><line x1="528.5" y1="454" x2="528.5" y2="457" stroke="#000000" stroke-width="1"/><rect x="526" y="418" width="5" height="36" fill="#000000"/><line x1="535.5" y1="444" x2="535.5" y2="450" stroke="#000000" stroke-width="1"/><line x1="535.5" y1="454" x2="535.5" y2="459" stroke="#000000" stroke-width="1"/><rect x="533.5" y="450.5" width="4" height="3" fill="none" stroke="#000000" stroke-width="1"/><line x1="542.5" y1="436" x2="542.5" y2="446" stroke="#ff0000" stroke-width="1"/><line x1="542.5" y1="493" x2="542.5" y2="481" stroke="#ff0000" stroke-width="1"/><rect x="540" y="446" width="5" height="47" fill="#ff0000"/><line x1="549.5" y1="483" x2="549.5" y2="495" stroke="#ff0000" stroke-width="1"/><line x1="549.5" y1="525" x2="549.5" y2="532" stroke="#ff0000" stroke-width="1"/><rect x="547" y="495" width="5" height="30" fill="#ff0000"/><line x1="556.5" y1="499" x2="556.5" y2="527" stroke="#ff0000" stroke-width="1"/><line x1="556.5" y1="540" x2="556.5" y2="554" stroke="#ff0000" stroke-width="1"/><rect x="554.5" y="527.5" width="4" height="12" fill="none" stroke="#ff0000" stroke-width="1"/><line x1="563.5" y1="481" x2="563.5" y2="490" stroke="#ff0000" stroke-width="1"/><line x1="563.5" y1="506" x2="563.5" y2="517" stroke="#ff0000" stroke-width="1"/><rect x="561.5" y="490.5" width="4" height="15" fill="none" stroke="#ff0000" stroke-width="1"/><line x1="570.5" y1="505" x2="570.5" y2="506" stroke="#ff0000" stroke-width="1"/><line x1="570.5" y1="523" x2="570.5" y2="536" stroke="#ff0000" stroke-width="1"/><rect x="568.5" y="506.5" width="4" height="16" fill="none" stroke="#ff0000" stroke-width="1"/><line x1="577.5" y1="466" x2="577.5" y2="468" stroke="#ff0000" stroke-width="1"/><line x1="577.5" y1="515" x2="577.5" y2="522" stroke="#ff0000" stroke-width="1"/><rect x="575.5" y="468.5" width="4" height="46" fill="none" stroke="#ff0000" stroke-width="1"/><line x1="584.5" y1="469" x2="584.5" y2="469" stroke="#ff0000" stroke-width="1"/><line x1="584.5" y1="493" x2="584.5" y2="501" stroke="#ff0000" stroke-width="1"/><rect x="582" y="469" width="5" height="24" fill="#ff0000"/><line x1="591.5" y1="470" x2="591.5" y2="473" stroke="#000000" stroke-width="1"/><line x1="591.5" y1="493" x2="591.5" y2="493" stroke="#000000" stroke-width="1"/><rect x="589.5" y="473.5" width="4" height="19" fill="none" stroke="#000000" stroke-width="1"/><line x1="598.5" y1="440" x2="598.5" y2="444" stroke="#000000" stroke-width="1"/><line x1="598.5" y1="460" x2="598.5" y2="462" stroke="#000000" stroke-width="1"/><rect x="596.5" y="444.5" width="4" height="15" fill="none" stroke="#000000" stroke-width="1"/><line x1="605.5" y1="423" x2="605.5" y2="444" stroke="#000000" stroke-width="1"/><line x1="605.5" y1="482" x2="605.5" y2="481" stroke="#000000" stroke-width="1"/><rect x="603" y="444" width="5" height="38" fill="#000000"/><line x1="612.5" y1="441" x2="612.5" y2="468" stroke="#000000" stroke-width="1"/><line x1="612.5" y1="476" x2="612.5" y2="492" stroke="#000000" stroke-width="1"/><rect x="610" y="468" width="5" height="8" fill="#000000"/><line x1="619.5" y1="460" x2="619.5" y2="462" stroke="#000000" stroke-width="1"/><line x1="619.5" y1="481" x2="619.5" y2="496" stroke="#000000" stroke-width="1"/><rect x="617.5" y="462.5" width="4" height="18" fill="none" stroke="#000000" stroke-width="1"/><line x1="626.5" y1="447" x2="626.5" y2="455" stroke="#000000" stroke-width="1"/><line x1="626.5" y1="459" x2="626.5" y2="462" stroke="#000000" stroke-width="1"/><rect x="624" y="455" width="5" height="4" fill="#000000"/><line x1="633.5" y1="457" x2="633.5" y2="460" stroke="#000000" stroke-width="1"/><line x1="633.5" y1="463" x2="633.5" y2="473" stroke="#000000" stroke-width="1"/><rect x="631" y="460" width="5" height="3" fill="#000000"/><line x1="640.5" y1="428" x2="640.5" y2="429" stroke="#000000" stroke-width="1"/><line x1="640.5" y1="447" x2="640.5" y2="446" stroke="#000000" stroke-width="1"/><rect x="638.5" y="429.5" width="4" height="17" fill="none" stroke="#000000" stroke-width="1"/><line x1="647.5" y1="413" x2="647.5" y2="416" stroke="#000000" stroke-width="1"/><line x1="647.5" y1="420" x2="647.5" y2="427" stroke="#000000" stroke-width="1"/><rect x="645.5" y="416.5" width="4" height="3" fill="none" stroke="#000000" stroke-width="1"/><line x1="654.5" y1="383" x2="654.5" y2="384" stroke="#0000ff" stroke-width="1"/><line x1="654.5" y1="415" x2="654.5" y2="414" stroke="#0000ff" stroke-width="1"/><rect x="652.5" y="384.5" width="4" height="30" fill="none" stroke="#0000ff" stroke-width="1"/><line x1="661.5" y1="373" x2="661.5" y2="375" stroke="#0000ff" stroke-width="1"/><line x1="661.5" y1="389" x2="661.5" y2="388" stroke="#0000ff" stroke-width="1"/><rect x="659.5" y="375.5" width="4" height="13" fill="none" stroke="#0000ff" stroke-width="1"/><line x1="668.5" y1="370" x2="668.5" y2="373" stroke="#0000ff" stroke-width="1"/><line x1="668.5" y1="390" x2="668.5" y2="397" stroke="#0000ff" stroke-width="1"/><rect x="666" y="373" width="5" height="17" fill="#0000ff"/><line x1="675.5" y1="389" x2="675.5" y2="392" stroke="#0000ff" stroke-width="1"/><line x1="675.5" y1="395" x2="675.5" y2="406" stroke="#0000ff" stroke-width="1"/><rect x="673" y="392" width="5" height="3" fill="#0000ff"/><line x1="682.5" y1="384" x2="682.5" y2="386" stroke="#0000ff" stroke-width="1"/><line x1="682.5" y1="400" x2="682.5" y2="402" stroke="#0000ff" stroke-width="1"/><rect x="680.5" y="386.5" width="4" height="13" fill="none" stroke="#0000ff" stroke-width="1"/><line x1="689.5" y1="384" x2="689.5" y2="384" stroke="#0000ff" stroke-width="1"/><line x1="689.5" y1="398" x2="689.5" y2="404" stroke="#0000ff" stroke-width="1"/><rect x="687.5" y="384.5" width="4" height="13" fill="none" stroke="#0000ff" stroke-width="1"/><line x1="696.5" y1="375" x2="696.5" y2="383" stroke="#0000ff" stroke-width="1"/><line x1="696.5" y1="385" x2="696.5" y2="388" stroke="#0000ff" stroke-width="1"/><rect x="694" y="383" width="5" height="2" fill="#0000ff"/><line x1="703.5" y1="375" x2="703.5" y2="377" stroke="#0000ff" stroke-width="1"/><line x1="703.5" y1="394" x2="703.5" y2="404" stroke="#0000ff" stroke-width="1"/><rect x="701" y="377" width="5" height="17" fill="#0000ff"/><line x1="710.5" y1="360" x2="710.5" y2="363" stroke="#0000ff" stroke-width="1"/><line x1="710.5" y1="390" x2="710.5" y2="389" stroke="#0000ff" stroke-width="1"/><rect x="708.5" y="363.5" width="4" height="26" fill="none" stroke="#0000ff" stroke-width="1"/><line x1="717.5" y1="352" x2="717.5" y2="366" stroke="#0000ff" stroke-width="1"/><line x1="717.5" y1="368" x2="717.5" y2="381" stroke="#0000ff" stroke-width="1"/><rect x="715" y="366" width="5" height="2" fill="#0000ff"/><line x1="724.5" y1="359" x2="724.5" y2="360" stroke="#0000ff" stroke-width="1"/><line x1="724.5" y1="369" x2="724.5" y2="376" stroke="#0000ff" stroke-width="1"/><rect x="722.5" y="360.5" width="4" height="8" fill="none" stroke="#0000ff" stroke-width="1"/><line x1="731.5" y1="349" x2="731.5" y2="352" stroke="#0000ff" stroke-width="1"/><line x1="731.5" y1="359" x2="731.5" y2="369" stroke="#0000ff" stroke-width="1"/><rect x="729" y="352" width="5" height="7" fill="#0000ff"/><line x1="738.5" y1="354" x2="738.5" y2="358" stroke="#0000ff" stroke-width="1"/><line x1="738.5" y1="367" x2="738.5" y2="369" stroke="#0000ff" stroke-width="1"/><rect x="736.5" y="358.5" width="4" height="8" fill="none" stroke="#0000ff" stroke-width="1"/><line x1="745.5" y1="362" x2="745.5" y2="371" stroke="#0000ff" stroke-width="1"/><line x1="745.5" y1="373" x2="745.5" y2="381" stroke="#0000ff" stroke-width="1"/><rect x="743" y="371" width="5" height="2" fill="#0000ff"/><line x1="752.5" y1="367" x2="752.5" y2="369" stroke="#0000ff" stroke-width="1"/><line x1="752.5" y1="372" x2="752.5" y2="381" stroke="#0000ff" stroke-width="1"/><rect x="750.5" y="369.5" width="4" height="2" fill="none" stroke="#0000ff" stroke-width="1"/></g><g clip-path="url(#cc)" shape-rendering="crispEdges"><path d="M80.7 100.6 L80.7 126.3 M74.7 114.3 L80.7 126.3 L86.7 114.3" fill="none" stroke="#008080" stroke-width="1"/><path d="M143.2 103.8 L143.2 128.8 M137.2 116.8 L143.2 128.8 L149.2 116.8" fill="none" stroke="#008080" stroke-width="1"/><path d="M269.1 103.8 L269.1 128.8 M263.1 116.8 L269.1 128.8 L275.1 116.8" fill="none" stroke="#008080" stroke-width="1"/><path d="M339.4 106.0 L339.4 131.0 M333.4 119.0 L339.4 131.0 L345.4 119.0" fill="none" stroke="#008080" stroke-width="1"/><path d="M437.6 104.4 L437.6 130.0 M431.6 118.0 L437.6 130.0 L443.6 118.0" fill="none" stroke="#008080" stroke-width="1"/><path d="M465.0 104.4 L465.0 130.0 M459.0 118.0 L465.0 130.0 L471.0 118.0" fill="none" stroke="#008080" stroke-width="1"/><path d="M556.6 104.0 L556.6 129.0 M550.6 117.0 L556.6 129.0 L562.6 117.0" fill="none" stroke="#008080" stroke-width="1"/><path d="M612.8 101.0 L612.8 127.0 M606.8 115.0 L612.8 127.0 L618.8 115.0" fill="none" stroke="#008080" stroke-width="1"/><path d="M696.6 102.0 L696.6 128.0 M690.6 116.0 L696.6 128.0 L702.6 116.0" fill="none" stroke="#008080" stroke-width="1"/><path d="M255.0 103.8 L255.0 129.4 M249.0 117.4 L255.0 129.4 L261.0 117.4" fill="none" stroke="#ff00ff" stroke-width="1"/><path d="M374.4 103.8 L374.4 128.8 M368.4 116.8 L374.4 128.8 L380.4 116.8" fill="none" stroke="#ff00ff" stroke-width="1"/><path d="M444.8 105.0 L444.8 130.6 M438.8 118.6 L444.8 130.6 L450.8 118.6" fill="none" stroke="#ff00ff" stroke-width="1"/><path d="M528.4 105.0 L528.4 130.6 M522.4 118.6 L528.4 130.6 L534.4 118.6" fill="none" stroke="#ff00ff" stroke-width="1"/><path d="M591.2 104.0 L591.2 129.0 M585.2 117.0 L591.2 129.0 L597.2 117.0" fill="none" stroke="#ff00ff" stroke-width="1"/><path d="M745.6 100.3 L745.6 126.6 M739.6 114.6 L745.6 126.6 L751.6 114.6" fill="none" stroke="#ff00ff" stroke-width="1"/><path d="M829.7 100.3 L829.7 126.0 M823.7 114.0 L829.7 126.0 L835.7 114.0" fill="none" stroke="#ff00ff" stroke-width="1"/><path d="M94.4 361.0 L94.4 386.0 M85.4 364.0 L94.4 386.0 L103.4 364.0" fill="none" stroke="#808080" stroke-width="2"/><path d="M297.0 386.0 L297.0 411.0 M288.0 389.0 L297.0 411.0 L306.0 389.0" fill="none" stroke="#808080" stroke-width="2"/><path d="M353.3 359.2 L353.3 385.0 M344.3 363.0 L353.3 385.0 L362.3 363.0" fill="none" stroke="#808080" stroke-width="2"/><path d="M401.7 312.5 L401.7 337.6 M392.7 315.6 L401.7 337.6 L410.7 315.6" fill="none" stroke="#808080" stroke-width="2"/><path d="M408.6 291.7 L408.6 317.7 M399.6 295.7 L408.6 317.7 L417.6 295.7" fill="none" stroke="#808080" stroke-width="2"/><path d="M444.1 323.7 L444.1 346.2 M435.1 324.2 L444.1 346.2 L453.1 324.2" fill="none" stroke="#808080" stroke-width="2"/><path d="M745.1 290.0 L745.1 316.0 M736.1 294.0 L745.1 316.0 L754.1 294.0" fill="none" stroke="#808080" stroke-width="2"/><path d="M570.5 447.0 L570.5 472.0 M561.5 450.0 L570.5 472.0 L579.5 450.0" fill="none" stroke="#808080" stroke-width="2"/><path d="M101.0 391.0 L101.0 415.0 M93.0 395.0 L101.0 415.0 L109.0 395.0" fill="none" stroke="#ff0000" stroke-width="2"/><path d="M122.0 407.6 L122.0 432.7 M114.0 412.7 L122.0 432.7 L130.0 412.7" fill="none" stroke="#ff0000" stroke-width="2"/><path d="M150.0 384.0 L150.0 409.0 M142.0 389.0 L150.0 409.0 L158.0 389.0" fill="none" stroke="#ff0000" stroke-width="2"/><path d="M185.2 463.2 L185.2 488.3 M177.2 468.3 L185.2 488.3 L193.2 468.3" fill="none" stroke="#ff0000" stroke-width="2"/><path d="M205.5 447.7 L205.5 472.8 M197.5 452.8 L205.5 472.8 L213.5 452.8" fill="none" stroke="#ff0000" stroke-width="2"/><path d="M240.3 471.9 L240.3 497.0 M232.3 477.0 L240.3 497.0 L248.3 477.0" fill="none" stroke="#ff0000" stroke-width="2"/><path d="M451.0 343.6 L451.0 367.8 M443.0 347.8 L451.0 367.8 L459.0 347.8" fill="none" stroke="#ff0000" stroke-width="2"/><path d="M528.0 372.1 L528.0 397.2 M520.0 377.2 L528.0 397.2 L536.0 377.2" fill="none" stroke="#ff0000" stroke-width="2"/><path d="M541.8 391.2 L541.8 416.3 M533.8 396.3 L541.8 416.3 L549.8 396.3" fill="none" stroke="#ff0000" stroke-width="2"/><path d="M570.7 418.9 L570.7 444.0 M564.7 426.0 L570.7 444.0 L576.7 426.0" fill="none" stroke="#ff0000" stroke-width="1"/><path d="M612.2 389.5 L612.2 414.6 M606.2 396.6 L612.2 414.6 L618.2 396.6" fill="none" stroke="#ff0000" stroke-width="1"/><path d="M619.7 414.6 L619.7 438.8 M613.7 420.8 L619.7 438.8 L625.7 420.8" fill="none" stroke="#ff0000" stroke-width="1"/><path d="M129.2 531.8 L129.2 498.9 M120.2 518.9 L129.2 498.9 L138.2 518.9" fill="none" stroke="#00f000" stroke-width="2"/><path d="M177.9 597.5 L177.9 565.6 M168.9 585.6 L177.9 565.6 L186.9 585.6" fill="none" stroke="#00f000" stroke-width="2"/><path d="M213.2 624.5 L213.2 592.6 M204.2 612.6 L213.2 592.6 L222.2 612.6" fill="none" stroke="#00f000" stroke-width="2"/><path d="M233.5 618.7 L233.5 588.8 M224.5 608.8 L233.5 588.8 L242.5 608.8" fill="none" stroke="#00f000" stroke-width="2"/><path d="M247.7 613.9 L247.7 582.0 M238.7 602.0 L247.7 582.0 L256.7 602.0" fill="none" stroke="#00f000" stroke-width="2"/><path d="M311.1 557.9 L311.1 525.0 M302.1 545.0 L311.1 525.0 L320.1 545.0" fill="none" stroke="#00f000" stroke-width="2"/><path d="M360.2 533.7 L360.2 500.9 M351.2 520.9 L360.2 500.9 L369.2 520.9" fill="none" stroke="#00f000" stroke-width="2"/><path d="M423.2 478.6 L423.2 447.7 M414.2 467.7 L423.2 447.7 L432.2 467.7" fill="none" stroke="#00f000" stroke-width="2"/><path d="M507.2 539.5 L507.2 507.6 M498.2 527.6 L507.2 507.6 L516.2 527.6" fill="none" stroke="#00f000" stroke-width="2"/><path d="M562.9 589.7 L562.9 557.9 M553.9 577.9 L562.9 557.9 L571.9 577.9" fill="none" stroke="#00f000" stroke-width="2"/><path d="M577.4 575.3 L577.4 543.4 M568.4 563.4 L577.4 543.4 L586.4 563.4" fill="none" stroke="#00f000" stroke-width="2"/><path d="M619.0 568.5 L619.0 536.6 M610.0 556.6 L619.0 536.6 L628.0 556.6" fill="none" stroke="#00f000" stroke-width="2"/><path d="M77.5 555.0 L77.5 522.0 M68.5 542.0 L77.5 522.0 L86.5 542.0" fill="none" stroke="#00f000" stroke-width="2"/><path d="M409.5 443.0 L409.5 411.0 M403.5 427.0 L409.5 411.0 L415.5 427.0" fill="none" stroke="#00f000" stroke-width="1"/><path d="M612.2 528.9 L612.2 497.6 M606.2 513.6 L612.2 497.6 L618.2 513.6" fill="none" stroke="#00f000" stroke-width="1"/><path d="M114.7 540.5 L114.7 504.7 M105.7 526.7 L114.7 504.7 L123.7 526.7" fill="none" stroke="#808080" stroke-width="2"/><path d="M192.0 602.3 L192.0 571.4 M183.0 593.4 L192.0 571.4 L201.0 593.4" fill="none" stroke="#808080" stroke-width="2"/><path d="M535.2 531.8 L535.2 499.9 M529.2 515.9 L535.2 499.9 L541.2 515.9" fill="none" stroke="#808080" stroke-width="1"/><path d="M255.0 749.0 L255.0 728.0 M249.0 741.0 L255.0 728.0 L261.0 741.0" fill="none" stroke="#808080" stroke-width="1"/><path d="M374.0 749.0 L374.0 728.0 M368.0 741.0 L374.0 728.0 L380.0 741.0" fill="none" stroke="#808080" stroke-width="1"/><path d="M752.8 749.0 L752.8 728.0 M746.8 741.0 L752.8 728.0 L758.8 741.0" fill="none" stroke="#808080" stroke-width="1"/><path d="M857.1 749.0 L857.1 728.0 M851.1 741.0 L857.1 728.0 L863.1 741.0" fill="none" stroke="#808080" stroke-width="1"/><path d="M941.5 749.0 L941.5 728.0 M935.5 741.0 L941.5 728.0 L947.5 741.0" fill="none" stroke="#808080" stroke-width="1"/></g></svg>
<div class="t b13" style="left:556px;top:285px;color:#000">New T Structure</div>
<div class="t b13" style="left:738px;top:271px;color:#000">COVER Signal</div>
<div class="t b13" style="left:472px;top:646px;color:#000">T Structure</div>
<div class="t b13" style="left:472px;top:662px;color:#000">collapsing into</div>
<div class="t b13" style="left:472px;top:678px;color:#000">larger structure</div>
<div class="t b13" style="left:822px;top:194px;color:#000">4412</div>
<div class="t b13" style="left:822px;top:307px;color:#000">4214</div>
<div class="t b13" style="left:822px;top:419px;color:#000">4016</div>
<div class="t b13" style="left:822px;top:635px;color:#000">3641</div>
<div class="t b13" style="left:927px;top:131px;color:#000">Next Echo and Pulse Highs</div>
<div class="t b13" style="left:927px;top:195px;color:#000">* COVER SIGNAL *</div>
<div class="t b13" style="left:927px;top:211px;color:#000">* NO SHORT ALERT *</div>
<div class="t b13" style="left:927px;top:243px;color:#000">COVER Signal at 4134 on 20 Apr</div>
<div class="t b13" style="left:927px;top:275px;color:#000">T volume Osc: positive on 29 Mar</div>
<div class="t b13" style="left:927px;top:291px;color:#000">Down</div>
<div class="t b13" style="left:927px;top:323px;color:#000">Osc: Buy Signal on 21 Mar</div>
<div class="t b13" style="left:927px;top:339px;color:#000">Up a little</div>
<div class="t b13" style="left:927px;top:419px;color:#000">Click here for</div>
<div class="t b13" style="left:927px;top:435px;color:#000">More Information...</div>
<div class="t b13" style="left:927px;top:707px;color:#000">Next Projected Low(s)</div>
<div class="t" style="left:79px;top:757px;color:#000;font-size:12.6px">Osc 5,35</div>
<svg width="1280" height="983" style="left:0;top:0"><g clip-path="url(#oc)" shape-rendering="crispEdges"><line x1="80.5" y1="848" x2="80.5" y2="778.1" stroke="#0000ff" stroke-width="1"/><line x1="87.5" y1="848" x2="87.5" y2="782.2" stroke="#0000ff" stroke-width="1"/><line x1="94.5" y1="848" x2="94.5" y2="783.1" stroke="#0000ff" stroke-width="1"/><line x1="101.5" y1="848" x2="101.5" y2="786.9" stroke="#0000ff" stroke-width="1"/><line x1="108.5" y1="848" x2="108.5" y2="796.2" stroke="#0000ff" stroke-width="1"/><line x1="115.5" y1="848" x2="115.5" y2="810.3" stroke="#0000ff" stroke-width="1"/><line x1="122.5" y1="848" x2="122.5" y2="822.8" stroke="#0000ff" stroke-width="1"/><line x1="129.5" y1="848" x2="129.5" y2="831.2" stroke="#0000ff" stroke-width="1"/><line x1="136.5" y1="848" x2="136.5" y2="826.9" stroke="#0000ff" stroke-width="1"/><line x1="143.5" y1="848" x2="143.5" y2="822.8" stroke="#0000ff" stroke-width="1"/><line x1="150.5" y1="848" x2="150.5" y2="826.9" stroke="#0000ff" stroke-width="1"/><line x1="157.5" y1="848" x2="157.5" y2="836.2" stroke="#0000ff" stroke-width="1"/><line x1="164.5" y1="848" x2="164.5" y2="847.8" stroke="#0000ff" stroke-width="1"/><line x1="171.5" y1="848" x2="171.5" y2="868.1" stroke="#0000ff" stroke-width="1"/><line x1="178.5" y1="848" x2="178.5" y2="881.2" stroke="#0000ff" stroke-width="1"/><line x1="185.5" y1="848" x2="185.5" y2="891.6" stroke="#0000ff" stroke-width="1"/><line x1="192.5" y1="848" x2="192.5" y2="895.3" stroke="#0000ff" stroke-width="1"/><line x1="199.5" y1="848" x2="199.5" y2="897.2" stroke="#0000ff" stroke-width="1"/><line x1="206.5" y1="848" x2="206.5" y2="898.4" stroke="#0000ff" stroke-width="1"/><line x1="213.5" y1="848" x2="213.5" y2="900.3" stroke="#0000ff" stroke-width="1"/><line x1="220.5" y1="848" x2="220.5" y2="898.4" stroke="#0000ff" stroke-width="1"/><line x1="227.5" y1="848" x2="227.5" y2="897.8" stroke="#0000ff" stroke-width="1"/><line x1="234.5" y1="848" x2="234.5" y2="894.7" stroke="#0000ff" stroke-width="1"/><line x1="241.5" y1="848" x2="241.5" y2="892.5" stroke="#0000ff" stroke-width="1"/><line x1="248.5" y1="848" x2="248.5" y2="887.8" stroke="#0000ff" stroke-width="1"/><line x1="255.5" y1="848" x2="255.5" y2="879.1" stroke="#0000ff" stroke-width="1"/><line x1="262.5" y1="848" x2="262.5" y2="872.8" stroke="#0000ff" stroke-width="1"/><line x1="269.5" y1="848" x2="269.5" y2="862.5" stroke="#0000ff" stroke-width="1"/><line x1="276.5" y1="848" x2="276.5" y2="850.0" stroke="#0000ff" stroke-width="1"/><line x1="283.5" y1="848" x2="283.5" y2="838.4" stroke="#0000ff" stroke-width="1"/><line x1="290.5" y1="848" x2="290.5" y2="831.2" stroke="#0000ff" stroke-width="1"/><line x1="297.5" y1="848" x2="297.5" y2="822.8" stroke="#0000ff" stroke-width="1"/><line x1="304.5" y1="848" x2="304.5" y2="825.9" stroke="#0000ff" stroke-width="1"/><line x1="311.5" y1="848" x2="311.5" y2="829.1" stroke="#0000ff" stroke-width="1"/><line x1="318.5" y1="848" x2="318.5" y2="825.0" stroke="#0000ff" stroke-width="1"/><line x1="325.5" y1="848" x2="325.5" y2="824.4" stroke="#0000ff" stroke-width="1"/><line x1="332.5" y1="848" x2="332.5" y2="822.8" stroke="#0000ff" stroke-width="1"/><line x1="339.5" y1="848" x2="339.5" y2="811.2" stroke="#0000ff" stroke-width="1"/><line x1="346.5" y1="848" x2="346.5" y2="800.0" stroke="#0000ff" stroke-width="1"/><line x1="353.5" y1="848" x2="353.5" y2="797.8" stroke="#0000ff" stroke-width="1"/><line x1="360.5" y1="848" x2="360.5" y2="794.7" stroke="#0000ff" stroke-width="1"/><line x1="367.5" y1="848" x2="367.5" y2="786.9" stroke="#0000ff" stroke-width="1"/><line x1="374.5" y1="848" x2="374.5" y2="778.1" stroke="#0000ff" stroke-width="1"/><line x1="381.5" y1="848" x2="381.5" y2="771.9" stroke="#0000ff" stroke-width="1"/><line x1="388.5" y1="848" x2="388.5" y2="766.6" stroke="#0000ff" stroke-width="1"/><line x1="395.5" y1="848" x2="395.5" y2="761.9" stroke="#0000ff" stroke-width="1"/><line x1="402.5" y1="848" x2="402.5" y2="761.9" stroke="#0000ff" stroke-width="1"/><line x1="409.5" y1="848" x2="409.5" y2="771.2" stroke="#0000ff" stroke-width="1"/><line x1="416.5" y1="848" x2="416.5" y2="780.6" stroke="#0000ff" stroke-width="1"/><line x1="423.5" y1="848" x2="423.5" y2="784.4" stroke="#0000ff" stroke-width="1"/><line x1="430.5" y1="848" x2="430.5" y2="788.4" stroke="#0000ff" stroke-width="1"/><line x1="437.5" y1="848" x2="437.5" y2="793.1" stroke="#0000ff" stroke-width="1"/><line x1="444.5" y1="848" x2="444.5" y2="796.2" stroke="#0000ff" stroke-width="1"/><line x1="451.5" y1="848" x2="451.5" y2="800.9" stroke="#0000ff" stroke-width="1"/><line x1="458.5" y1="848" x2="458.5" y2="811.9" stroke="#0000ff" stroke-width="1"/><line x1="465.5" y1="848" x2="465.5" y2="825.9" stroke="#0000ff" stroke-width="1"/><line x1="472.5" y1="848" x2="472.5" y2="840.0" stroke="#0000ff" stroke-width="1"/><line x1="479.5" y1="848" x2="479.5" y2="855.6" stroke="#0000ff" stroke-width="1"/><line x1="486.5" y1="848" x2="486.5" y2="865.0" stroke="#0000ff" stroke-width="1"/><line x1="493.5" y1="848" x2="493.5" y2="869.7" stroke="#0000ff" stroke-width="1"/><line x1="500.5" y1="848" x2="500.5" y2="874.4" stroke="#0000ff" stroke-width="1"/><line x1="507.5" y1="848" x2="507.5" y2="879.1" stroke="#0000ff" stroke-width="1"/><line x1="514.5" y1="848" x2="514.5" y2="871.2" stroke="#0000ff" stroke-width="1"/><line x1="521.5" y1="848" x2="521.5" y2="868.1" stroke="#0000ff" stroke-width="1"/><line x1="528.5" y1="848" x2="528.5" y2="866.6" stroke="#0000ff" stroke-width="1"/><line x1="535.5" y1="848" x2="535.5" y2="863.4" stroke="#0000ff" stroke-width="1"/><line x1="542.5" y1="848" x2="542.5" y2="861.9" stroke="#0000ff" stroke-width="1"/><line x1="549.5" y1="848" x2="549.5" y2="874.4" stroke="#0000ff" stroke-width="1"/><line x1="556.5" y1="848" x2="556.5" y2="893.1" stroke="#0000ff" stroke-width="1"/><line x1="563.5" y1="848" x2="563.5" y2="900.9" stroke="#0000ff" stroke-width="1"/><line x1="570.5" y1="848" x2="570.5" y2="910.3" stroke="#0000ff" stroke-width="1"/><line x1="577.5" y1="848" x2="577.5" y2="913.4" stroke="#0000ff" stroke-width="1"/><line x1="584.5" y1="848" x2="584.5" y2="908.8" stroke="#0000ff" stroke-width="1"/><line x1="591.5" y1="848" x2="591.5" y2="899.4" stroke="#0000ff" stroke-width="1"/><line x1="598.5" y1="848" x2="598.5" y2="891.6" stroke="#0000ff" stroke-width="1"/><line x1="605.5" y1="848" x2="605.5" y2="879.1" stroke="#0000ff" stroke-width="1"/><line x1="612.5" y1="848" x2="612.5" y2="874.4" stroke="#0000ff" stroke-width="1"/><line x1="619.5" y1="848" x2="619.5" y2="869.7" stroke="#0000ff" stroke-width="1"/><line x1="626.5" y1="848" x2="626.5" y2="863.4" stroke="#0000ff" stroke-width="1"/><line x1="633.5" y1="848" x2="633.5" y2="861.9" stroke="#0000ff" stroke-width="1"/><line x1="640.5" y1="848" x2="640.5" y2="858.8" stroke="#0000ff" stroke-width="1"/><line x1="647.5" y1="848" x2="647.5" y2="850.9" stroke="#0000ff" stroke-width="1"/><line x1="654.5" y1="848" x2="654.5" y2="836.9" stroke="#0000ff" stroke-width="1"/><line x1="661.5" y1="848" x2="661.5" y2="825.0" stroke="#0000ff" stroke-width="1"/><line x1="668.5" y1="848" x2="668.5" y2="812.5" stroke="#0000ff" stroke-width="1"/><line x1="675.5" y1="848" x2="675.5" y2="805.0" stroke="#0000ff" stroke-width="1"/><line x1="682.5" y1="848" x2="682.5" y2="801.9" stroke="#0000ff" stroke-width="1"/><line x1="689.5" y1="848" x2="689.5" y2="800.9" stroke="#0000ff" stroke-width="1"/><line x1="696.5" y1="848" x2="696.5" y2="801.9" stroke="#0000ff" stroke-width="1"/><line x1="703.5" y1="848" x2="703.5" y2="800.9" stroke="#0000ff" stroke-width="1"/><line x1="710.5" y1="848" x2="710.5" y2="800.0" stroke="#0000ff" stroke-width="1"/><line x1="717.5" y1="848" x2="717.5" y2="797.2" stroke="#0000ff" stroke-width="1"/><line x1="724.5" y1="848" x2="724.5" y2="795.6" stroke="#0000ff" stroke-width="1"/><line x1="731.5" y1="848" x2="731.5" y2="793.1" stroke="#0000ff" stroke-width="1"/><line x1="738.5" y1="848" x2="738.5" y2="792.5" stroke="#0000ff" stroke-width="1"/><line x1="745.5" y1="848" x2="745.5" y2="794.7" stroke="#0000ff" stroke-width="1"/><line x1="752.5" y1="848" x2="752.5" y2="797.8" stroke="#0000ff" stroke-width="1"/></g><g clip-path="url(#oc)"><polyline points="80.6,785.3 109.0,785.3 124.0,788.5 132.0,792.5 157.5,798.0 276.6,797.8 339.4,808.1 360.3,807.2 409.4,794.7 437.5,794.7 451.6,795.6 472.2,799.4 647.5,799.4 668.4,803.4 696.2,802.5 724.4,801.6 752.5,799.4" fill="none" stroke="#000" stroke-width="1.2" stroke-linejoin="round" /><polyline points="159.4,920.6 184.4,913.4 231.2,908.8 256.2,902.5 276.6,897.8 470.6,897.8 486.2,893.1 526.9,888.4 542.5,885.3 558.1,885.3 580.0,888.4 592.5,890.6 619.7,886.9 647.5,882.2 752.5,882.2" fill="none" stroke="#000" stroke-width="1.2" stroke-linejoin="round" /><path d="M101.0 730.0 L101.0 766.0 M93.0 746.0 L101.0 766.0 L109.0 746.0" fill="none" stroke="#ff0000" stroke-width="2"/><path d="M437.0 748.0 L437.0 776.0 M428.0 754.0 L437.0 776.0 L446.0 754.0" fill="none" stroke="#ff0000" stroke-width="2"/><path d="M548.7 801.0 L548.7 835.0 M539.7 813.0 L548.7 835.0 L557.7 813.0" fill="none" stroke="#ff0000" stroke-width="2"/><path d="M528.0 925.0 L528.0 890.0 M519.0 912.0 L528.0 890.0 L537.0 912.0" fill="none" stroke="#00f000" stroke-width="2"/><path d="M598.0 925.0 L598.0 903.0 M589.0 923.0 L598.0 903.0 L607.0 923.0" fill="none" stroke="#00f000" stroke-width="2"/></g></svg>
<div class="t b13" style="left:619px;top:886px;color:#000">Osc Buy Signal</div>
</body></html>
